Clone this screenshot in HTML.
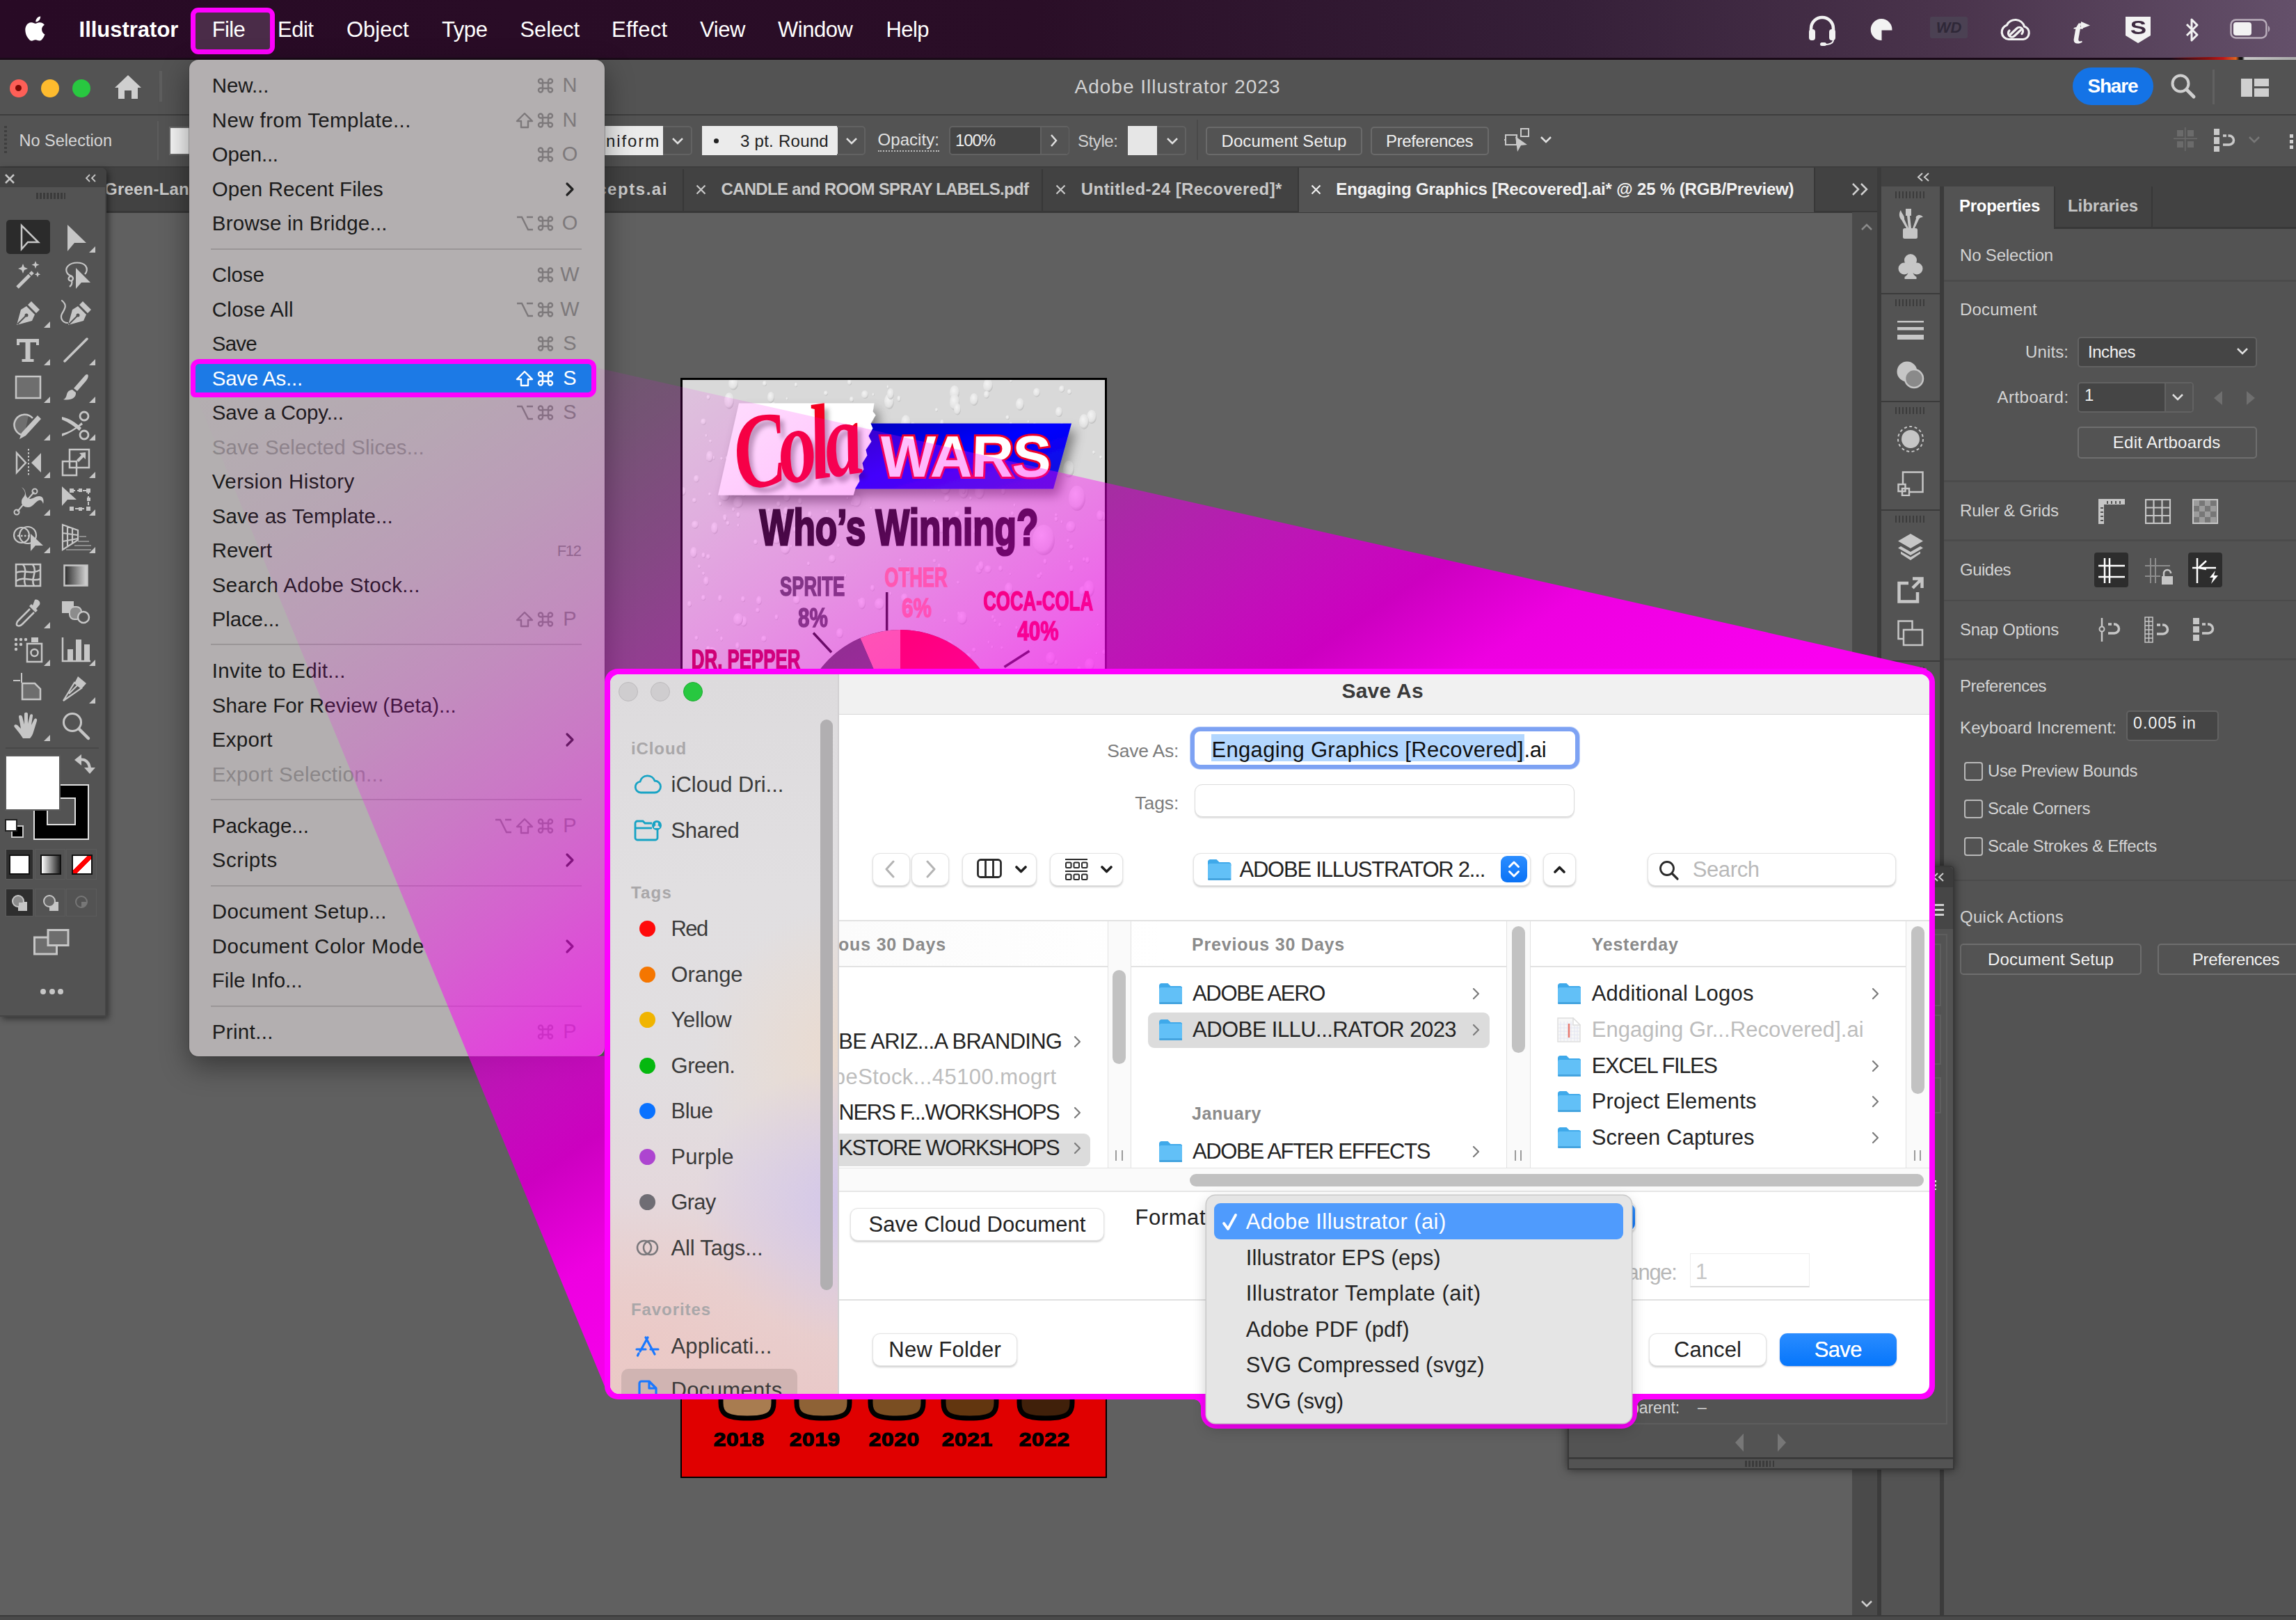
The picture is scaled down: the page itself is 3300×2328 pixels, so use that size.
<!DOCTYPE html><html><head><meta charset="utf-8"><title>Save As</title><style>html,body{margin:0;padding:0}
body{width:3300px;height:2328px;position:relative;overflow:hidden;background:#606060;font-family:"Liberation Sans",sans-serif;}
div,svg,.t{position:absolute}
.t{white-space:pre;line-height:1;display:block}
</style></head><body>
<div style="left:0px;top:0px;width:3300px;height:86px;background:linear-gradient(90deg,#280a25 0%,#2a0e27 45%,#351f38 68%,#4a344c 85%,#64506a 100%);"></div>
<div style="left:0px;top:83px;width:3300px;height:3px;background:#1a0a18;"></div>
<div style="left:3120px;top:82px;width:180px;height:3.5px;background:linear-gradient(90deg,transparent 0,#8a1010 30%,#c01818 42%,#e0641e 52%,#111 55%,#111 57%,#c8c8c8 59%,#a8a8a8 100%);"></div>
<svg style="left:35px;top:20px;" width="34" height="42" viewBox="-2 0 36 42"><path fill="#fff" d="M24.6 22.3c0-4.6 3.8-6.8 4-6.9-2.200-3.200-5.600-3.600-6.800-3.700-2.900-.3-5.600 1.700-7.100 1.700-1.500 0-3.700-1.700-6.100-1.600-3.100 0-6 1.800-7.600 4.600C-2.300 22-.1 30.400 3.200 35c1.600 2.300 3.400 4.800 5.800 4.700 2.300-.1 3.200-1.500 6-1.500s3.600 1.500 6.100 1.400c2.500 0 4.100-2.300 5.600-4.600 1.800-2.600 2.500-5.200 2.500-5.300-.1 0-4.600-1.800-4.600-7.400zM20.600 8.300C21.900 6.800 22.700 4.700 22.500 2.600c-1.800.1-4 1.200-5.300 2.700-1.200 1.300-2.200 3.500-1.900 5.500 2 .2 4-1 5.300-2.500z"/></svg>
<span class="t" style="left:113.6px;top:27.4px;font-size:31px;color:#fff;font-weight:700;letter-spacing:-0.02px;">Illustrator</span>
<div style="left:274px;top:10.5px;width:120.5px;height:67px;border:7px solid #ff00ff;border-radius:11px;background:#4a2c48;box-sizing:border-box;"></div>
<span class="t" style="left:304.7px;top:27.4px;font-size:31px;color:#fff;letter-spacing:-0.61px;">File</span>
<span class="t" style="left:399px;top:27.4px;font-size:31px;color:#fff;letter-spacing:-0.48px;">Edit</span>
<span class="t" style="left:498px;top:27.4px;font-size:31px;color:#fff;">Object</span>
<span class="t" style="left:635px;top:27.4px;font-size:31px;color:#fff;letter-spacing:-0.43px;">Type</span>
<span class="t" style="left:747.5px;top:27.4px;font-size:31px;color:#fff;letter-spacing:-0.11px;">Select</span>
<span class="t" style="left:879px;top:27.4px;font-size:31px;color:#fff;letter-spacing:0.3px;">Effect</span>
<span class="t" style="left:1006px;top:27.4px;font-size:31px;color:#fff;letter-spacing:-0.41px;">View</span>
<span class="t" style="left:1118px;top:27.4px;font-size:31px;color:#fff;letter-spacing:-0.46px;">Window</span>
<span class="t" style="left:1273.5px;top:27.4px;font-size:31px;color:#fff;letter-spacing:-0.56px;">Help</span>
<svg style="left:2596px;top:20px;" width="46" height="46" viewBox="0 0 46 46"><path fill="none" stroke="#f2f2f2" stroke-width="4.500" d="M7 27v-6a16 16 0 0 1 32 0v6"/><rect x="4" y="22" width="9" height="16" rx="4" fill="#f2f2f2"/><rect x="33" y="22" width="9" height="16" rx="4" fill="#f2f2f2"/><path fill="none" stroke="#f2f2f2" stroke-width="2" d="M39 37c0 5-6 7-13 7"/><rect x="20" y="41" width="9" height="5" rx="2.500" fill="#f2f2f2"/></svg>
<svg style="left:2687px;top:25px;" width="36" height="36" viewBox="0 0 36 36"><path fill="#f2f2f2" d="M17 2a15.500 15.500 0 1 0 .5 31v-14.500h15A15.500 15.500 0 0 0 17 2z"/></svg>
<div style="left:2774px;top:24px;width:54px;height:31px;background:#4b4254;border-radius:3px;opacity:.9"></div>
<span class="t" style="left:2782.7px;top:28.9px;font-size:22px;color:#2f2838;font-weight:700;font-style:italic;">WD</span>
<svg style="left:2873px;top:24px;" width="48" height="36" viewBox="0 0 48 36"><g fill="none" stroke="#f2f2f2" stroke-width="3.200" stroke-linecap="round"><path d="M14 32.500A10.500 10.500 0 0 1 11.500 12 13.500 13.500 0 0 1 36.500 14 9.500 9.500 0 0 1 35 32.500z"/><path d="M17 25l8.500-8a5.300 5.300 0 0 1 7.500 7.500M31 19.500l-8.500 8a5.300 5.300 0 0 1-7.500-7.500"/></g></svg>
<span class="t" style="left:2979.1px;top:19.5px;font-size:50px;color:#f2f2f2;font-weight:700;font-family:'Liberation Serif',serif;font-style:italic;">t</span>
<svg style="left:2990px;top:30px;" width="16" height="14" viewBox="0 0 16 14"><path fill="#f2f2f2" d="M1 1l13 5.500-13 5z"/></svg>
<svg style="left:3054px;top:23px;" width="38" height="40" viewBox="0 0 38 40"><path fill="#f2f2f2" d="M1 1h36v27l-18 11-18-11z"/></svg>
<span class="t" style="left:3063.7px;top:25.9px;font-size:28px;color:#3d2a40;font-weight:700;transform:scaleX(1.25);">S</span>
<svg style="left:3140px;top:24px;" width="22" height="38" viewBox="0 0 22 38"><path fill="none" stroke="#f2f2f2" stroke-width="3" stroke-linejoin="round" d="M3 11l15 15-8 8V4l8 8L3 27"/></svg>
<svg style="left:3205px;top:27px;" width="60" height="30" viewBox="0 0 60 30"><rect x="1.500" y="1.500" width="51" height="26" rx="7" fill="none" stroke="#b9adbb" stroke-width="2.500"/><rect x="5" y="5" width="26" height="19" rx="4" fill="#f2f2f2"/><path fill="#b9adbb" d="M55 10c3 1 3 8 0 9z"/></svg>
<div style="left:0px;top:86px;width:3300px;height:79px;background:#535353;"></div>
<div style="left:0px;top:164px;width:3300px;height:2px;background:#3d3d3d;"></div>
<div style="left:13.5px;top:113.5px;width:26px;height:26px;background:#fe5f57;border-radius:50%;"></div>
<div style="left:58.8px;top:113.5px;width:26px;height:26px;background:#febb2e;border-radius:50%;"></div>
<div style="left:103.7px;top:113.5px;width:26px;height:26px;background:#28c840;border-radius:50%;"></div>
<div style="left:22px;top:122px;width:9px;height:9px;background:#7a0a05;border-radius:50%;"></div>
<svg style="left:164px;top:107px;" width="40" height="36" viewBox="0 0 40 36"><path fill="#cfcfcf" d="M20 1L1 19h5v16h9V23h10v12h9V19h5z"/></svg>
<div style="left:229px;top:102px;width:4px;height:44px;background:#5e5e5e;"></div>
<span class="t" style="left:1544.5px;top:111.4px;font-size:28px;color:#d2d2d2;letter-spacing:1.0px;">Adobe Illustrator 2023</span>
<div style="left:2979px;top:96.5px;width:116px;height:54px;background:#1473e6;border-radius:27px;"></div>
<span class="t" style="left:3000.4px;top:109.9px;font-size:28px;color:#fff;font-weight:700;letter-spacing:-1.16px;">Share</span>
<svg style="left:3118px;top:104px;" width="42" height="42" viewBox="0 0 42 42"><circle cx="16" cy="16" r="11.500" fill="none" stroke="#cfcfcf" stroke-width="4"/><path stroke="#cfcfcf" stroke-width="5" stroke-linecap="round" d="M25 25l10 10"/></svg>
<div style="left:3180px;top:100px;width:3px;height:50px;background:#616161;"></div>
<svg style="left:3221px;top:113px;" width="40" height="26" viewBox="0 0 40 26"><path fill="#cfcfcf" d="M0 0h16v26H0zM19 0h21v11H19zM19 14h21v12H19z"/></svg>
<div style="left:0px;top:166px;width:3300px;height:75px;background:#535353;"></div>
<div style="left:0px;top:239px;width:3300px;height:2px;background:#3d3d3d;"></div>
<div style="left:6px;top:181px;width:4px;height:42px;background:repeating-linear-gradient(180deg,#3e3e3e 0 3px,transparent 3px 6px);"></div>
<span class="t" style="left:27.4px;top:191.2px;font-size:23.5px;color:#d6d6d6;letter-spacing:0.03px;">No Selection</span>
<div style="left:226px;top:174px;width:2px;height:56px;background:#5c5c5c;"></div>
<div style="left:243px;top:182px;width:80px;height:41px;background:#f4f4f4;border:2px solid #6a6a6a;box-sizing:border-box;"></div>
<div style="left:840px;top:181px;width:113px;height:42px;background:#ebebeb;"></div>
<span class="t" style="left:871px;top:190.9px;font-size:24px;color:#1e1e1e;letter-spacing:1.89px;">niform</span>
<div style="left:953px;top:181px;width:42px;height:42px;border:2px solid #626262;border-left:none;border-radius:0 5px 5px 0;box-sizing:border-box;"></div>
<svg style="left:965px;top:197px;" width="18" height="12" viewBox="0 0 18 12"><path fill="none" stroke="#e0e0e0" stroke-width="2.500" d="M2 2l7 7 7-7"/></svg>
<div style="left:1008.6px;top:181px;width:195px;height:42px;background:#ebebeb;"></div>
<div style="left:1026px;top:199px;width:7px;height:7px;background:#222;border-radius:50%;"></div>
<span class="t" style="left:1064px;top:190.9px;font-size:24px;color:#1e1e1e;letter-spacing:0.26px;">3 pt. Round</span>
<div style="left:1203px;top:181px;width:41px;height:42px;border:2px solid #626262;border-left:none;border-radius:0 5px 5px 0;box-sizing:border-box;"></div>
<svg style="left:1215px;top:197px;" width="18" height="12" viewBox="0 0 18 12"><path fill="none" stroke="#e0e0e0" stroke-width="2.500" d="M2 2l7 7 7-7"/></svg>
<span class="t" style="left:1261.5px;top:188.9px;font-size:24px;color:#e2e2e2;letter-spacing:0.06px;border-bottom:2px dotted #bdbdbd;padding-bottom:3px;">Opacity:</span>
<div style="left:1363.5px;top:181px;width:173px;height:42px;border:2px solid #626262;border-radius:5px;box-sizing:border-box;background:#454545;"></div>
<div style="left:1495px;top:183px;width:41px;height:38px;background:#535353;border-left:2px solid #626262;box-sizing:border-box;border-radius:0 4px 4px 0;"></div>
<span class="t" style="left:1373px;top:189.9px;font-size:24px;color:#f0f0f0;letter-spacing:-1.1px;">100%</span>
<svg style="left:1509px;top:192px;" width="12" height="20" viewBox="0 0 12 20"><path fill="none" stroke="#e0e0e0" stroke-width="2.500" d="M2 2l7 8-7 8"/></svg>
<span class="t" style="left:1549px;top:190.9px;font-size:24px;color:#d0d0d0;letter-spacing:-0.42px;">Style:</span>
<div style="left:1621px;top:181px;width:42px;height:42px;background:#e6e6e6;"></div>
<div style="left:1663px;top:181px;width:42px;height:42px;border:2px solid #626262;border-left:none;border-radius:0 5px 5px 0;box-sizing:border-box;"></div>
<svg style="left:1676px;top:197px;" width="18" height="12" viewBox="0 0 18 12"><path fill="none" stroke="#e0e0e0" stroke-width="2.500" d="M2 2l7 7 7-7"/></svg>
<div style="left:1720px;top:172px;width:2px;height:58px;background:#4a4a4a;"></div>
<div style="left:1733.4px;top:182px;width:224.3px;height:40.5px;border:2px solid #6a6a6a;border-radius:5px;box-sizing:border-box;"></div>
<span class="t" style="left:1755.5px;top:190.9px;font-size:24px;color:#f0f0f0;letter-spacing:0.09px;">Document Setup</span>
<div style="left:1969.7px;top:182px;width:170.2px;height:40.5px;border:2px solid #6a6a6a;border-radius:5px;box-sizing:border-box;"></div>
<span class="t" style="left:1992.1px;top:190.9px;font-size:24px;color:#f0f0f0;letter-spacing:-0.4px;">Preferences</span>
<svg style="left:2162px;top:182px;" width="38" height="40" viewBox="0 0 38 40"><g fill="none" stroke="#c9c9c9" stroke-width="2"><rect x="24" y="3" width="11" height="11"/><path d="M2 12h16v14H2zM0 19h3M17 19h4"/></g><path fill="#c9c9c9" d="M16 14l17 12-9 1-5 9z"/></svg>
<svg style="left:2213px;top:195px;" width="18" height="12" viewBox="0 0 18 12"><path fill="none" stroke="#e0e0e0" stroke-width="2.500" d="M2 2l7 7 7-7"/></svg>
<svg style="left:3124px;top:183px;" width="34" height="34" viewBox="0 0 34 34"><g fill="#6b6b6b"><rect x="5" y="4" width="9" height="9"/><rect x="20" y="4" width="9" height="9"/><rect x="5" y="20" width="9" height="9"/><rect x="20" y="20" width="9" height="9"/><rect x="0" y="15.500" width="34" height="1.500"/><rect x="16" y="0" width="1.500" height="34"/></g></svg>
<svg style="left:3178px;top:185px;" width="40" height="34" viewBox="0 0 40 34"><g fill="#c9c9c9"><rect x="4" y="0" width="8" height="9"/><rect x="4" y="12" width="8" height="10"/><rect x="4" y="25" width="8" height="8"/></g><path fill="none" stroke="#c9c9c9" stroke-width="3.500" d="M17 10h9a6 6 0 0 1 0 13h-9" stroke-dasharray="5 2.500 40"/></svg>
<svg style="left:3231px;top:195px;" width="18" height="12" viewBox="0 0 18 12"><path fill="none" stroke="#777" stroke-width="2.500" d="M2 2l7 7 7-7"/></svg>
<div style="left:3291px;top:193px;width:5px;height:22px;background:repeating-linear-gradient(180deg,#d0d0d0 0 5px,transparent 5px 8px);"></div>
<div style="left:0px;top:241px;width:2698px;height:64px;background:#424242;"></div>
<div style="left:0px;top:303px;width:2698px;height:2.5px;background:#383838;"></div>
<span class="t" style="left:150px;top:259.9px;font-size:24px;color:#c9c9c9;font-weight:700;letter-spacing:0.22px;">Green-Lan</span>
<span class="t" style="left:842px;top:259.9px;font-size:24px;color:#c9c9c9;font-weight:700;letter-spacing:1.55px;">ncepts.ai</span>
<div style="left:981px;top:243px;width:2px;height:60px;background:#383838;"></div>
<svg style="left:1000px;top:265px;" width="15" height="15" viewBox="0 0 15 15"><path stroke="#c9c9c9" stroke-width="2.200" d="M1.500 1.500l12 12M13.500 1.500l-12 12"/></svg>
<span class="t" style="left:1036.4px;top:259.9px;font-size:24px;color:#c9c9c9;font-weight:700;letter-spacing:-0.69px;">CANDLE and ROOM SPRAY LABELS.pdf</span>
<div style="left:1497px;top:243px;width:2px;height:60px;background:#383838;"></div>
<svg style="left:1517px;top:265px;" width="15" height="15" viewBox="0 0 15 15"><path stroke="#c9c9c9" stroke-width="2.200" d="M1.500 1.500l12 12M13.500 1.500l-12 12"/></svg>
<span class="t" style="left:1553.8px;top:259.9px;font-size:24px;color:#c9c9c9;font-weight:700;letter-spacing:0.43px;">Untitled-24 [Recovered]*</span>
<div style="left:1865px;top:241px;width:744px;height:64px;background:#535353;border-left:2px solid #383838;border-right:2px solid #383838;box-sizing:border-box;"></div>
<svg style="left:1883.6px;top:265px;" width="15" height="15" viewBox="0 0 15 15"><path stroke="#f0f0f0" stroke-width="2.200" d="M1.500 1.500l12 12M13.500 1.500l-12 12"/></svg>
<span class="t" style="left:1920.3px;top:259.9px;font-size:24px;color:#f2f2f2;font-weight:700;letter-spacing:-0.15px;">Engaging Graphics [Recovered].ai* @ 25 % (RGB/Preview)</span>
<svg style="left:2661px;top:262px;" width="26" height="20" viewBox="0 0 26 20"><path fill="none" stroke="#d0d0d0" stroke-width="2.500" d="M2 2l8 8-8 8M14 2l8 8-8 8"/></svg>
<div style="left:2662px;top:305px;width:37px;height:2018px;background:#4a4a4a;"></div>
<svg style="left:2674px;top:320px;" width="18" height="12" viewBox="0 0 18 12"><path fill="none" stroke="#8a8a8a" stroke-width="2.500" d="M2 10l7-7 7 7"/></svg>
<svg style="left:2674px;top:2299px;" width="18" height="12" viewBox="0 0 18 12"><path fill="none" stroke="#d0d0d0" stroke-width="2.500" d="M2 2l7 7 7-7"/></svg>
<div style="left:2698px;top:241px;width:96px;height:2082px;background:#3b3b3b;"></div>
<div style="left:2704px;top:241px;width:596px;height:27px;background:#424242;"></div>
<svg style="left:2755px;top:248px;" width="20" height="13" viewBox="0 0 20 13"><path fill="none" stroke="#d0d0d0" stroke-width="2" d="M8 1L2 6.500 8 12M17 1l-6 5.500L17 12"/></svg>
<div style="left:2704px;top:268px;width:83.5px;height:153px;background:#535353;"></div>
<div style="left:2724px;top:275px;width:43px;height:10px;background:repeating-linear-gradient(90deg,#3b3b3b 0 2.500px,transparent 2.500px 5px);"></div>
<div style="left:2704px;top:423px;width:83.5px;height:153px;background:#535353;"></div>
<div style="left:2724px;top:430px;width:43px;height:10px;background:repeating-linear-gradient(90deg,#3b3b3b 0 2.500px,transparent 2.500px 5px);"></div>
<div style="left:2704px;top:578px;width:83.5px;height:154px;background:#535353;"></div>
<div style="left:2724px;top:585px;width:43px;height:10px;background:repeating-linear-gradient(90deg,#3b3b3b 0 2.500px,transparent 2.500px 5px);"></div>
<div style="left:2704px;top:734px;width:83.5px;height:215px;background:#535353;"></div>
<div style="left:2724px;top:741px;width:43px;height:10px;background:repeating-linear-gradient(90deg,#3b3b3b 0 2.500px,transparent 2.500px 5px);"></div>
<div style="left:2704px;top:951px;width:83.5px;height:1372px;background:#535353;"></div>
<div style="left:2724px;top:958px;width:43px;height:10px;background:repeating-linear-gradient(90deg,#3b3b3b 0 2.500px,transparent 2.500px 5px);"></div>
<svg style="left:2727.5px;top:299px;" width="36" height="44" viewBox="0 0 36 44"><g fill="#c6c6c6"><rect x="7" y="29" width="21" height="15" rx="2.500"/><path d="M12 29L5 17C1 13 1 7 4 3c1 5 6 8 5 13l6 13zM15 29L13 11h-2V1h8v10h-2l2 18zM21 29l5-14c-2-4 6-8 10-2-3 0-5 1-6 3l-6 13z"/></g></svg>
<svg style="left:2727.5px;top:365px;" width="36" height="37" viewBox="0 0 36 37"><g fill="#c6c6c6"><circle cx="18" cy="9" r="9"/><circle cx="9" cy="21" r="8.500"/><circle cx="27" cy="21" r="8.500"/><path d="M15.500 16h5c0 10 1 14 6 17v3h-17v-3c5-3 6-7 6-17z"/></g></svg>
<svg style="left:2726.5px;top:460.7px;" width="38" height="28" viewBox="0 0 38 28"><g fill="#c6c6c6"><rect y="0" width="38" height="2.500"/><rect y="9" width="38" height="4.500"/><rect y="20" width="38" height="7"/></g></svg>
<svg style="left:2725.5px;top:519px;" width="40" height="40" viewBox="0 0 40 40"><circle cx="15" cy="15" r="14.500" fill="#c6c6c6"/><circle cx="25" cy="25" r="13" fill="#8a8a8a" stroke="#c6c6c6" stroke-width="2.500"/></svg>
<svg style="left:2725.5px;top:611px;" width="40" height="40" viewBox="0 0 40 40"><circle cx="20" cy="20" r="13" fill="#c6c6c6"/><circle cx="20" cy="20" r="18" fill="none" stroke="#c6c6c6" stroke-width="2" stroke-dasharray="4 3.500"/></svg>
<svg style="left:2726.5px;top:677px;" width="38" height="36" viewBox="0 0 38 36"><g fill="none" stroke="#c6c6c6" stroke-width="2.500"><path d="M8 18V1.500h28.500V30H18"/><rect x="1.500" y="19" width="10" height="10"/><rect x="7" y="25" width="10" height="10"/></g></svg>
<svg style="left:2727.5px;top:766.5px;" width="36" height="38" viewBox="0 0 36 38"><path fill="#c6c6c6" d="M18 0l18 10.500L18 21 0 10.500zM4 18l14 8 14-8 4 2.500L18 31 0 20.500zM4 25.500l14 8 14-8 0 3L18 38 4 29z"/></svg>
<svg style="left:2726.5px;top:829.4px;" width="38" height="38" viewBox="0 0 38 38"><path fill="none" stroke="#c6c6c6" stroke-width="4.500" d="M16 9H2.500v26.500H29V22M22 16L35 3M22 2.500h13.500V16"/></svg>
<svg style="left:2726.5px;top:891.4px;" width="38" height="38" viewBox="0 0 38 38"><g fill="none" stroke="#c6c6c6" stroke-width="2.500"><path d="M9 27H1.500V1.500h20V14"/><rect x="9" y="14" width="27" height="22"/></g></svg>
<div style="left:2794px;top:268px;width:506px;height:2055px;background:#535353;"></div>
<div style="left:2794px;top:268px;width:506px;height:60px;background:#424242;"></div>
<div style="left:2794px;top:268px;width:158px;height:61px;background:#535353;"></div>
<div style="left:2952px;top:268px;width:2px;height:58px;background:#383838;"></div>
<div style="left:3092px;top:268px;width:2px;height:58px;background:#383838;"></div>
<div style="left:2952px;top:326px;width:348px;height:2.5px;background:#383838;"></div>
<span class="t" style="left:2816px;top:283.9px;font-size:24px;color:#fff;font-weight:700;letter-spacing:-0.27px;">Properties</span>
<span class="t" style="left:2972px;top:283.9px;font-size:24px;color:#c4c4c4;font-weight:700;letter-spacing:-0.04px;">Libraries</span>
<span class="t" style="left:2817px;top:354.9px;font-size:24px;color:#d4d4d4;letter-spacing:-0.17px;">No Selection</span>
<div style="left:2794px;top:402px;width:506px;height:2.5px;background:#4b4b4b;"></div>
<span class="t" style="left:2817px;top:432.7px;font-size:24px;color:#d4d4d4;letter-spacing:0.2px;">Document</span>
<span class="t" style="left:2911.1px;top:493.9px;font-size:24px;color:#d4d4d4;letter-spacing:0.11px;">Units:</span>
<div style="left:2986px;top:483.7px;width:258px;height:44px;border:2px solid #626262;border-radius:5px;box-sizing:border-box;background:#454545;"></div>
<span class="t" style="left:3001px;top:493.9px;font-size:24px;color:#f2f2f2;letter-spacing:-0.45px;">Inches</span>
<svg style="left:3214px;top:499px;" width="18" height="12" viewBox="0 0 18 12"><path fill="none" stroke="#e0e0e0" stroke-width="2.500" d="M2 2l7 7 7-7"/></svg>
<span class="t" style="left:2870.5px;top:558.6px;font-size:24px;color:#d4d4d4;letter-spacing:0.48px;">Artboard:</span>
<div style="left:2986px;top:548.5px;width:167px;height:44.5px;border:2px solid #626262;border-radius:5px;box-sizing:border-box;background:#454545;"></div>
<div style="left:3111px;top:550.5px;width:40px;height:40.5px;background:#535353;border-left:2px solid #626262;box-sizing:border-box;border-radius:0 4px 4px 0;"></div>
<span class="t" style="left:2996px;top:555.9px;font-size:24px;color:#f2f2f2;">1</span>
<svg style="left:3121px;top:565px;" width="18" height="12" viewBox="0 0 18 12"><path fill="none" stroke="#e0e0e0" stroke-width="2.500" d="M2 2l7 7 7-7"/></svg>
<svg style="left:3182px;top:562px;" width="12" height="20" viewBox="0 0 12 20"><path fill="#6f6f6f" d="M12 0v20L0 10z"/></svg>
<svg style="left:3229px;top:562px;" width="12" height="20" viewBox="0 0 12 20"><path fill="#6f6f6f" d="M0 0v20l12-10z"/></svg>
<div style="left:2986px;top:613px;width:258px;height:45.5px;border:2px solid #6e6e6e;border-radius:5px;box-sizing:border-box;"></div>
<span class="t" style="left:3036.7px;top:623.9px;font-size:24px;color:#f2f2f2;letter-spacing:0.3px;">Edit Artboards</span>
<div style="left:2794px;top:690px;width:506px;height:2.5px;background:#4b4b4b;"></div>
<span class="t" style="left:2817px;top:722.3px;font-size:24px;color:#d4d4d4;letter-spacing:-0.16px;">Ruler &amp; Grids</span>
<svg style="left:3016px;top:717px;" width="38" height="36" viewBox="0 0 38 36"><path fill="#c6c6c6" d="M0 0h38v8H8v28H0z"/><g fill="#535353"><rect x="12" y="3" width="2" height="4"/><rect x="18" y="3" width="2" height="4"/><rect x="24" y="3" width="2" height="4"/><rect x="30" y="3" width="2" height="4"/><rect x="3" y="12" width="4" height="2"/><rect x="3" y="18" width="4" height="2"/><rect x="3" y="24" width="4" height="2"/><rect x="3" y="30" width="4" height="2"/></g></svg>
<svg style="left:3083px;top:717px;" width="38" height="36" viewBox="0 0 38 36"><g fill="none" stroke="#c6c6c6" stroke-width="2.200"><rect x="1" y="1" width="35" height="34"/><path d="M12.500 1v34M24.500 1v34M1 12.500h35M1 24h35"/></g></svg>
<svg style="left:3151px;top:717px;" width="38" height="36" viewBox="0 0 38 36"><rect x="1" y="1" width="35" height="34" fill="#777" stroke="#c6c6c6" stroke-width="2.200"/><g fill="#9c9c9c"><rect x="2" y="2" width="8" height="8"/><rect x="18" y="2" width="8" height="8"/><rect x="10" y="10" width="8" height="8"/><rect x="26" y="10" width="8" height="8"/><rect x="2" y="18" width="8" height="8"/><rect x="18" y="18" width="8" height="8"/><rect x="10" y="26" width="8" height="8"/><rect x="26" y="26" width="8" height="8"/></g></svg>
<div style="left:2794px;top:775px;width:506px;height:2.5px;background:#4b4b4b;"></div>
<span class="t" style="left:2817px;top:807.4px;font-size:24px;color:#d4d4d4;letter-spacing:-0.51px;">Guides</span>
<div style="left:3010px;top:794px;width:49px;height:50px;background:#2d2d2d;border-radius:4px;"></div>
<svg style="left:3016px;top:802px;" width="38" height="36" viewBox="0 0 38 36"><path stroke="#fff" stroke-width="2.500" fill="none" d="M9 0v36M16 0v36M0 11h38M0 27h38"/></svg>
<svg style="left:3083px;top:802px;" width="42" height="38" viewBox="0 0 42 38"><path stroke="#8d8d8d" stroke-width="2" fill="none" d="M8 0v36M15 0v36M0 11h36M0 26h22"/><rect x="24" y="26" width="16" height="12" fill="#c6c6c6"/><path fill="none" stroke="#c6c6c6" stroke-width="2.500" d="M27 26v-4a5 5 0 0 1 10 0"/></svg>
<div style="left:3145px;top:794px;width:49px;height:50px;background:#2d2d2d;border-radius:4px;"></div>
<svg style="left:3151px;top:800px;" width="40" height="40" viewBox="0 0 40 40"><path stroke="#fff" stroke-width="2.500" fill="none" d="M7 2v36M0 16h34M20 6l-11 10 11 2"/><path fill="#fff" d="M33 20l-8 10h5l-3 9 10-12h-6z"/></svg>
<div style="left:2794px;top:861.7px;width:506px;height:2.5px;background:#4b4b4b;"></div>
<span class="t" style="left:2817px;top:892.9px;font-size:24px;color:#d4d4d4;letter-spacing:-0.29px;">Snap Options</span>
<svg style="left:3016px;top:888px;" width="36" height="34" viewBox="0 0 36 34"><path stroke="#c6c6c6" stroke-width="2.500" d="M5 0v34"/><circle cx="5" cy="16" r="3.500" fill="#535353" stroke="#c6c6c6" stroke-width="2"/><path fill="none" stroke="#c6c6c6" stroke-width="3.500" d="M14 9h9a6.500 6.500 0 0 1 0 13h-9" stroke-dasharray="5 3 40"/></svg>
<svg style="left:3082px;top:886px;" width="40" height="38" viewBox="0 0 40 38"><g stroke="#c6c6c6" stroke-width="1.500" fill="none"><path d="M1 1h11v36H1zM6.500 1v36M1 7h11M1 13h11M1 19h11M1 25h11M1 31h11"/></g><g transform="translate(4,3)"><path fill="none" stroke="#c6c6c6" stroke-width="3.500" d="M14 9h9a6.500 6.500 0 0 1 0 13h-9" stroke-dasharray="5 3 40"/></g></svg>
<svg style="left:3151px;top:888px;" width="36" height="34" viewBox="0 0 36 34"><g fill="#c6c6c6"><rect x="1" y="0" width="9" height="9"/><rect x="1" y="12" width="9" height="9"/><rect x="1" y="24" width="9" height="9"/></g><path fill="none" stroke="#c6c6c6" stroke-width="3.500" d="M14 9h9a6.500 6.500 0 0 1 0 13h-9" stroke-dasharray="5 3 40"/></svg>
<div style="left:2794px;top:946px;width:506px;height:2.5px;background:#4b4b4b;"></div>
<span class="t" style="left:2817px;top:973.6px;font-size:24px;color:#d4d4d4;letter-spacing:-0.49px;">Preferences</span>
<span class="t" style="left:2817px;top:1033.5px;font-size:24px;color:#d4d4d4;letter-spacing:0.12px;">Keyboard Increment:</span>
<div style="left:3055.6px;top:1021px;width:133.5px;height:44px;border:2px solid #626262;border-radius:5px;box-sizing:border-box;background:#454545;"></div>
<span class="t" style="left:3066px;top:1028.4px;font-size:23px;color:#f2f2f2;letter-spacing:1.14px;">0.005 in</span>
<div style="left:2823px;top:1094.5px;width:27px;height:27px;border:2px solid #b9b9b9;border-radius:4px;box-sizing:border-box;"></div>
<span class="t" style="left:2857px;top:1095.9px;font-size:24px;color:#d4d4d4;letter-spacing:-0.43px;">Use Preview Bounds</span>
<div style="left:2823px;top:1148.5px;width:27px;height:27px;border:2px solid #b9b9b9;border-radius:4px;box-sizing:border-box;"></div>
<span class="t" style="left:2857px;top:1149.9px;font-size:24px;color:#d4d4d4;letter-spacing:-0.39px;">Scale Corners</span>
<div style="left:2823px;top:1202.5px;width:27px;height:27px;border:2px solid #b9b9b9;border-radius:4px;box-sizing:border-box;"></div>
<span class="t" style="left:2857px;top:1203.9px;font-size:24px;color:#d4d4d4;letter-spacing:-0.32px;">Scale Strokes &amp; Effects</span>
<div style="left:2794px;top:1263.8px;width:506px;height:2.5px;background:#4b4b4b;"></div>
<span class="t" style="left:2817px;top:1305.7px;font-size:24px;color:#d4d4d4;letter-spacing:0.28px;">Quick Actions</span>
<div style="left:2817px;top:1355.7px;width:261px;height:45.5px;border:2px solid #6e6e6e;border-radius:5px;box-sizing:border-box;"></div>
<span class="t" style="left:2857.1px;top:1366.9px;font-size:24px;color:#f2f2f2;letter-spacing:0.16px;">Document Setup</span>
<div style="left:3101px;top:1355.7px;width:230px;height:45.5px;border:2px solid #6e6e6e;border-radius:5px;box-sizing:border-box;"></div>
<span class="t" style="left:3151px;top:1366.9px;font-size:24px;color:#f2f2f2;letter-spacing:-0.4px;">Preferences</span>
<div style="left:0px;top:2321px;width:3300px;height:7px;background:#4a4a4a;"></div>
<div style="left:0px;top:2321px;width:3300px;height:2px;background:#3a3a3a;"></div>
<svg style="left:980px;top:546px;" width="609" height="430" viewBox="0 0 609 430"><defs><radialGradient id="dg" cx=".4" cy=".35" r=".7"><stop offset="0" stop-color="#f4f4f4"/><stop offset=".7" stop-color="#e2e2e2"/><stop offset="1" stop-color="#b4b4b4"/></radialGradient>
<linearGradient id="bl" x1="0" y1="0" x2="1" y2="1"><stop offset="0" stop-color="#0000b8"/><stop offset=".45" stop-color="#0000ff"/><stop offset="1" stop-color="#1a10d8"/></linearGradient>
<filter id="sh" x="-10%" y="-10%" width="130%" height="150%"><feDropShadow dx="7" dy="10" stdDeviation="8" flood-color="#000" flood-opacity=".42"/></filter></defs>
<rect width="609" height="430" fill="#d9d9d9"/><ellipse cx="197" cy="63" rx="1.5" ry="1.7" fill="url(#dg)"/><ellipse cx="326" cy="154" rx="1.5" ry="2.5" fill="url(#dg)"/><ellipse cx="131" cy="36" rx="4" ry="4.6" fill="url(#dg)"/><ellipse cx="55" cy="178" rx="2" ry="3.3" fill="url(#dg)"/><ellipse cx="384" cy="245" rx="1.5" ry="2.2" fill="url(#dg)"/><ellipse cx="242" cy="410" rx="1.5" ry="2.2" fill="url(#dg)"/><ellipse cx="81" cy="176" rx="7" ry="8.2" fill="url(#dg)"/><ellipse cx="188" cy="343" rx="2" ry="2.3" fill="url(#dg)"/><ellipse cx="348" cy="79" rx="2" ry="2.9" fill="url(#dg)"/><ellipse cx="38" cy="25" rx="2.5" ry="3.5" fill="url(#dg)"/><ellipse cx="324" cy="326" rx="5" ry="7.3" fill="url(#dg)"/><ellipse cx="276" cy="126" rx="2" ry="3.0" fill="url(#dg)"/><ellipse cx="149" cy="241" rx="7" ry="9.8" fill="url(#dg)"/><ellipse cx="209" cy="189" rx="2" ry="2.3" fill="url(#dg)"/><ellipse cx="255" cy="318" rx="2" ry="3.3" fill="url(#dg)"/><ellipse cx="257" cy="404" rx="2" ry="3.1" fill="url(#dg)"/><ellipse cx="349" cy="368" rx="3" ry="3.9" fill="url(#dg)"/><ellipse cx="213" cy="209" rx="5" ry="5.7" fill="url(#dg)"/><ellipse cx="57" cy="113" rx="2" ry="2.3" fill="url(#dg)"/><ellipse cx="427" cy="272" rx="5" ry="6.4" fill="url(#dg)"/><ellipse cx="235" cy="281" rx="1.5" ry="2.5" fill="url(#dg)"/><ellipse cx="216" cy="257" rx="5" ry="5.7" fill="url(#dg)"/><ellipse cx="468" cy="54" rx="2.5" ry="3.3" fill="url(#dg)"/><ellipse cx="558" cy="209" rx="2" ry="2.7" fill="url(#dg)"/><ellipse cx="335" cy="371" rx="4" ry="6.5" fill="url(#dg)"/><ellipse cx="170" cy="174" rx="3" ry="4.5" fill="url(#dg)"/><ellipse cx="232" cy="97" rx="2" ry="2.4" fill="url(#dg)"/><ellipse cx="141" cy="98" rx="5" ry="8.0" fill="url(#dg)"/><ellipse cx="111" cy="118" rx="2" ry="2.7" fill="url(#dg)"/><ellipse cx="225" cy="238" rx="2" ry="3.0" fill="url(#dg)"/><ellipse cx="314" cy="259" rx="1.5" ry="2.1" fill="url(#dg)"/><ellipse cx="530" cy="400" rx="7" ry="9.3" fill="url(#dg)"/><ellipse cx="243" cy="43" rx="4" ry="4.5" fill="url(#dg)"/><ellipse cx="41" cy="88" rx="2" ry="2.3" fill="url(#dg)"/><ellipse cx="366" cy="43" rx="2" ry="2.8" fill="url(#dg)"/><ellipse cx="578" cy="258" rx="2" ry="3.2" fill="url(#dg)"/><ellipse cx="374" cy="62" rx="3" ry="5.0" fill="url(#dg)"/><ellipse cx="367" cy="199" rx="2" ry="3.2" fill="url(#dg)"/><ellipse cx="605" cy="196" rx="5" ry="6.4" fill="url(#dg)"/><ellipse cx="88" cy="315" rx="3" ry="4.2" fill="url(#dg)"/><ellipse cx="421" cy="217" rx="2.5" ry="4.2" fill="url(#dg)"/><ellipse cx="322" cy="62" rx="7" ry="11.5" fill="url(#dg)"/><ellipse cx="462" cy="125" rx="2" ry="3.0" fill="url(#dg)"/><ellipse cx="159" cy="154" rx="2" ry="2.6" fill="url(#dg)"/><ellipse cx="136" cy="227" rx="7" ry="9.1" fill="url(#dg)"/><ellipse cx="136" cy="341" rx="2.5" ry="4.0" fill="url(#dg)"/><ellipse cx="498" cy="311" rx="2.5" ry="3.0" fill="url(#dg)"/><ellipse cx="300" cy="307" rx="1.5" ry="2.4" fill="url(#dg)"/><ellipse cx="288" cy="81" rx="3" ry="4.1" fill="url(#dg)"/><ellipse cx="571" cy="415" rx="3" ry="3.4" fill="url(#dg)"/><ellipse cx="62" cy="197" rx="3" ry="3.7" fill="url(#dg)"/><ellipse cx="380" cy="378" rx="1.5" ry="2.1" fill="url(#dg)"/><ellipse cx="398" cy="336" rx="2" ry="3.2" fill="url(#dg)"/><ellipse cx="73" cy="163" rx="2.5" ry="3.5" fill="url(#dg)"/><ellipse cx="109" cy="331" rx="3" ry="3.5" fill="url(#dg)"/><ellipse cx="576" cy="303" rx="5" ry="6.7" fill="url(#dg)"/><ellipse cx="577" cy="304" rx="2" ry="3.4" fill="url(#dg)"/><ellipse cx="17" cy="248" rx="5" ry="7.9" fill="url(#dg)"/><ellipse cx="89" cy="347" rx="5" ry="7.5" fill="url(#dg)"/><ellipse cx="213" cy="230" rx="2" ry="2.2" fill="url(#dg)"/><ellipse cx="487" cy="305" rx="2" ry="2.8" fill="url(#dg)"/><ellipse cx="569" cy="182" rx="2.5" ry="4.0" fill="url(#dg)"/><ellipse cx="129" cy="106" rx="3" ry="4.2" fill="url(#dg)"/><ellipse cx="465" cy="137" rx="7" ry="9.5" fill="url(#dg)"/><ellipse cx="80" cy="382" rx="3" ry="4.9" fill="url(#dg)"/><ellipse cx="403" cy="342" rx="7" ry="9.5" fill="url(#dg)"/><ellipse cx="559" cy="211" rx="7" ry="8.3" fill="url(#dg)"/><ellipse cx="311" cy="367" rx="2" ry="2.9" fill="url(#dg)"/><ellipse cx="473" cy="63" rx="2" ry="2.8" fill="url(#dg)"/><ellipse cx="442" cy="234" rx="3" ry="4.5" fill="url(#dg)"/><ellipse cx="323" cy="203" rx="2" ry="3.3" fill="url(#dg)"/><ellipse cx="35" cy="80" rx="1.5" ry="2.3" fill="url(#dg)"/><ellipse cx="309" cy="236" rx="2" ry="2.7" fill="url(#dg)"/><ellipse cx="373" cy="212" rx="7" ry="8.5" fill="url(#dg)"/><ellipse cx="169" cy="213" rx="5" ry="7.0" fill="url(#dg)"/><ellipse cx="151" cy="220" rx="3" ry="5.0" fill="url(#dg)"/><ellipse cx="544" cy="85" rx="5" ry="5.9" fill="url(#dg)"/><ellipse cx="74" cy="186" rx="2" ry="3.0" fill="url(#dg)"/><ellipse cx="261" cy="89" rx="3" ry="4.7" fill="url(#dg)"/><ellipse cx="546" cy="65" rx="3" ry="3.6" fill="url(#dg)"/><ellipse cx="538" cy="406" rx="2.5" ry="3.9" fill="url(#dg)"/><ellipse cx="57" cy="372" rx="2" ry="3.4" fill="url(#dg)"/><ellipse cx="507" cy="68" rx="4" ry="6.8" fill="url(#dg)"/><ellipse cx="246" cy="177" rx="3" ry="3.9" fill="url(#dg)"/><ellipse cx="440" cy="8" rx="7" ry="9.6" fill="url(#dg)"/><ellipse cx="428" cy="161" rx="7" ry="10.3" fill="url(#dg)"/><ellipse cx="312" cy="27" rx="2.5" ry="4.2" fill="url(#dg)"/><ellipse cx="64" cy="112" rx="1.5" ry="2.5" fill="url(#dg)"/><ellipse cx="111" cy="317" rx="4" ry="6.4" fill="url(#dg)"/><ellipse cx="412" cy="397" rx="4" ry="4.8" fill="url(#dg)"/><ellipse cx="560" cy="240" rx="3" ry="3.5" fill="url(#dg)"/><ellipse cx="35" cy="289" rx="4" ry="6.5" fill="url(#dg)"/><ellipse cx="164" cy="7" rx="2" ry="3.2" fill="url(#dg)"/><ellipse cx="51" cy="360" rx="2" ry="2.5" fill="url(#dg)"/><ellipse cx="74" cy="5" rx="7" ry="9.5" fill="url(#dg)"/><ellipse cx="557" cy="261" rx="1.5" ry="2.1" fill="url(#dg)"/><ellipse cx="145" cy="46" rx="2" ry="2.5" fill="url(#dg)"/><ellipse cx="110" cy="392" rx="3" ry="4.3" fill="url(#dg)"/><ellipse cx="125" cy="187" rx="2" ry="2.5" fill="url(#dg)"/><ellipse cx="489" cy="418" rx="1.5" ry="1.7" fill="url(#dg)"/><ellipse cx="446" cy="231" rx="2.5" ry="3.5" fill="url(#dg)"/><ellipse cx="150" cy="188" rx="4" ry="6.0" fill="url(#dg)"/><ellipse cx="332" cy="373" rx="7" ry="9.0" fill="url(#dg)"/><ellipse cx="131" cy="96" rx="2.5" ry="4.0" fill="url(#dg)"/><ellipse cx="430" cy="267" rx="4" ry="6.8" fill="url(#dg)"/><ellipse cx="598" cy="352" rx="1.5" ry="1.7" fill="url(#dg)"/><ellipse cx="451" cy="107" rx="2" ry="2.3" fill="url(#dg)"/><ellipse cx="405" cy="160" rx="7" ry="10.5" fill="url(#dg)"/><ellipse cx="172" cy="102" rx="3" ry="3.4" fill="url(#dg)"/><ellipse cx="113" cy="113" rx="1.5" ry="1.9" fill="url(#dg)"/><ellipse cx="586" cy="409" rx="7" ry="9.1" fill="url(#dg)"/><ellipse cx="21" cy="371" rx="2.5" ry="3.3" fill="url(#dg)"/><ellipse cx="1" cy="160" rx="5" ry="6.3" fill="url(#dg)"/><ellipse cx="400" cy="104" rx="1.5" ry="1.7" fill="url(#dg)"/><ellipse cx="498" cy="60" rx="1.5" ry="2.0" fill="url(#dg)"/><ellipse cx="182" cy="264" rx="2" ry="2.9" fill="url(#dg)"/><ellipse cx="322" cy="315" rx="4" ry="6.2" fill="url(#dg)"/><ellipse cx="439" cy="208" rx="3" ry="4.6" fill="url(#dg)"/><ellipse cx="392" cy="18" rx="7" ry="10.3" fill="url(#dg)"/><ellipse cx="447" cy="341" rx="2" ry="3.3" fill="url(#dg)"/><ellipse cx="458" cy="239" rx="1.5" ry="2.4" fill="url(#dg)"/><ellipse cx="356" cy="375" rx="2.5" ry="2.9" fill="url(#dg)"/><ellipse cx="25" cy="268" rx="2" ry="2.7" fill="url(#dg)"/><ellipse cx="275" cy="21" rx="1.5" ry="2.2" fill="url(#dg)"/><ellipse cx="415" cy="206" rx="1.5" ry="2.1" fill="url(#dg)"/><ellipse cx="43" cy="392" rx="7" ry="8.1" fill="url(#dg)"/><ellipse cx="320" cy="313" rx="5" ry="6.3" fill="url(#dg)"/><ellipse cx="45" cy="112" rx="2.5" ry="3.1" fill="url(#dg)"/><ellipse cx="396" cy="193" rx="4" ry="4.6" fill="url(#dg)"/><ellipse cx="554" cy="121" rx="1.5" ry="2.2" fill="url(#dg)"/><ellipse cx="391" cy="33" rx="2" ry="2.6" fill="url(#dg)"/><ellipse cx="397" cy="291" rx="2" ry="2.2" fill="url(#dg)"/><ellipse cx="37" cy="113" rx="2" ry="3.0" fill="url(#dg)"/><ellipse cx="412" cy="122" rx="7" ry="8.9" fill="url(#dg)"/><ellipse cx="284" cy="322" rx="7" ry="8.5" fill="url(#dg)"/><ellipse cx="596" cy="393" rx="1.5" ry="1.9" fill="url(#dg)"/><ellipse cx="47" cy="213" rx="5" ry="8.5" fill="url(#dg)"/><ellipse cx="236" cy="385" rx="2.5" ry="2.9" fill="url(#dg)"/><ellipse cx="55" cy="314" rx="3" ry="5.0" fill="url(#dg)"/><ellipse cx="81" cy="344" rx="7" ry="8.9" fill="url(#dg)"/><ellipse cx="69" cy="153" rx="5" ry="8.2" fill="url(#dg)"/><ellipse cx="296" cy="10" rx="1.5" ry="2.5" fill="url(#dg)"/><ellipse cx="415" cy="170" rx="2" ry="2.7" fill="url(#dg)"/><ellipse cx="229" cy="51" rx="3" ry="3.3" fill="url(#dg)"/><ellipse cx="457" cy="352" rx="2" ry="3.3" fill="url(#dg)"/><ellipse cx="119" cy="5" rx="3" ry="3.8" fill="url(#dg)"/><ellipse cx="40" cy="164" rx="2" ry="2.6" fill="url(#dg)"/><ellipse cx="261" cy="116" rx="1.5" ry="1.9" fill="url(#dg)"/><ellipse cx="31" cy="278" rx="2" ry="2.5" fill="url(#dg)"/><ellipse cx="162" cy="215" rx="2.5" ry="3.9" fill="url(#dg)"/><ellipse cx="478" cy="180" rx="1.5" ry="2.4" fill="url(#dg)"/><ellipse cx="384" cy="384" rx="7" ry="10.0" fill="url(#dg)"/><ellipse cx="438" cy="21" rx="4" ry="5.5" fill="url(#dg)"/><ellipse cx="458" cy="271" rx="3" ry="4.2" fill="url(#dg)"/><ellipse cx="555" cy="231" rx="2" ry="2.8" fill="url(#dg)"/><ellipse cx="209" cy="125" rx="3" ry="4.0" fill="url(#dg)"/><ellipse cx="145" cy="203" rx="4" ry="4.7" fill="url(#dg)"/><ellipse cx="392" cy="32" rx="7" ry="11.5" fill="url(#dg)"/><ellipse cx="303" cy="92" rx="3" ry="5.1" fill="url(#dg)"/><ellipse cx="274" cy="59" rx="2.5" ry="3.1" fill="url(#dg)"/><ellipse cx="106" cy="233" rx="3" ry="3.7" fill="url(#dg)"/><ellipse cx="157" cy="239" rx="1.5" ry="2.3" fill="url(#dg)"/><ellipse cx="251" cy="174" rx="7" ry="8.6" fill="url(#dg)"/><ellipse cx="165" cy="316" rx="5" ry="6.3" fill="url(#dg)"/><ellipse cx="589" cy="53" rx="7" ry="9.9" fill="url(#dg)"/><ellipse cx="481" cy="356" rx="2" ry="2.5" fill="url(#dg)"/><ellipse cx="151" cy="168" rx="5" ry="6.8" fill="url(#dg)"/><ellipse cx="190" cy="342" rx="1.5" ry="1.8" fill="url(#dg)"/><ellipse cx="259" cy="321" rx="5" ry="8.4" fill="url(#dg)"/><ellipse cx="298" cy="31" rx="7" ry="11.3" fill="url(#dg)"/><ellipse cx="592" cy="104" rx="2" ry="2.5" fill="url(#dg)"/><ellipse cx="93" cy="408" rx="2" ry="3.3" fill="url(#dg)"/><ellipse cx="440" cy="272" rx="5" ry="5.8" fill="url(#dg)"/><ellipse cx="473" cy="1" rx="2" ry="2.5" fill="url(#dg)"/><ellipse cx="560" cy="271" rx="3" ry="5.0" fill="url(#dg)"/><ellipse cx="382" cy="222" rx="4" ry="6.1" fill="url(#dg)"/><ellipse cx="68" cy="30" rx="7" ry="11.7" fill="url(#dg)"/><ellipse cx="117" cy="110" rx="1.5" ry="1.7" fill="url(#dg)"/><ellipse cx="184" cy="193" rx="3" ry="4.5" fill="url(#dg)"/><ellipse cx="538" cy="200" rx="2.5" ry="3.6" fill="url(#dg)"/><ellipse cx="18" cy="173" rx="3" ry="3.4" fill="url(#dg)"/><ellipse cx="118" cy="372" rx="4" ry="4.6" fill="url(#dg)"/><ellipse cx="139" cy="178" rx="3" ry="3.7" fill="url(#dg)"/><ellipse cx="21" cy="142" rx="4" ry="5.3" fill="url(#dg)"/><ellipse cx="241" cy="3" rx="3" ry="4.6" fill="url(#dg)"/><ellipse cx="307" cy="86" rx="2.5" ry="3.2" fill="url(#dg)"/><ellipse cx="499" cy="97" rx="2.5" ry="3.1" fill="url(#dg)"/><ellipse cx="542" cy="46" rx="5" ry="7.3" fill="url(#dg)"/><ellipse cx="546" cy="204" rx="1.5" ry="2.5" fill="url(#dg)"/><ellipse cx="89" cy="165" rx="2.5" ry="2.8" fill="url(#dg)"/><ellipse cx="363" cy="174" rx="1.5" ry="1.8" fill="url(#dg)"/><ellipse cx="274" cy="299" rx="3" ry="4.6" fill="url(#dg)"/><ellipse cx="607" cy="391" rx="3" ry="3.6" fill="url(#dg)"/><ellipse cx="397" cy="220" rx="5" ry="5.6" fill="url(#dg)"/><ellipse cx="405" cy="159" rx="3" ry="5.1" fill="url(#dg)"/><ellipse cx="269" cy="46" rx="2" ry="2.5" fill="url(#dg)"/><ellipse cx="214" cy="401" rx="2" ry="2.9" fill="url(#dg)"/><ellipse cx="462" cy="160" rx="3" ry="4.8" fill="url(#dg)"/><ellipse cx="263" cy="21" rx="5" ry="6.1" fill="url(#dg)"/><ellipse cx="330" cy="187" rx="3" ry="4.0" fill="url(#dg)"/><ellipse cx="546" cy="13" rx="4" ry="5.0" fill="url(#dg)"/><ellipse cx="381" cy="170" rx="4" ry="4.5" fill="url(#dg)"/><ellipse cx="38" cy="386" rx="3" ry="3.7" fill="url(#dg)"/><ellipse cx="38" cy="254" rx="3" ry="3.8" fill="url(#dg)"/><ellipse cx="583" cy="259" rx="3" ry="4.6" fill="url(#dg)"/><ellipse cx="420" cy="388" rx="3" ry="3.3" fill="url(#dg)"/><ellipse cx="460" cy="385" rx="2" ry="2.2" fill="url(#dg)"/><ellipse cx="142" cy="200" rx="5" ry="8.4" fill="url(#dg)"/><ellipse cx="235" cy="105" rx="4" ry="6.4" fill="url(#dg)"/><ellipse cx="81" cy="209" rx="1.5" ry="2.4" fill="url(#dg)"/><ellipse cx="450" cy="346" rx="2" ry="2.9" fill="url(#dg)"/><ellipse cx="200" cy="134" rx="3" ry="4.7" fill="url(#dg)"/><ellipse cx="363" cy="215" rx="4" ry="6.2" fill="url(#dg)"/><ellipse cx="151" cy="27" rx="1.5" ry="2.1" fill="url(#dg)"/><ellipse cx="332" cy="67" rx="4" ry="6.5" fill="url(#dg)"/><ellipse cx="602" cy="111" rx="2" ry="2.5" fill="url(#dg)"/><ellipse cx="256" cy="415" rx="5" ry="6.0" fill="url(#dg)"/><ellipse cx="81" cy="194" rx="2.5" ry="3.9" fill="url(#dg)"/><ellipse cx="516" cy="279" rx="2" ry="3.1" fill="url(#dg)"/><ellipse cx="179" cy="117" rx="3" ry="4.0" fill="url(#dg)"/><ellipse cx="449" cy="84" rx="2.5" ry="3.0" fill="url(#dg)"/><ellipse cx="143" cy="118" rx="2.5" ry="3.2" fill="url(#dg)"/><ellipse cx="241" cy="417" rx="7" ry="9.9" fill="url(#dg)"/><ellipse cx="396" cy="42" rx="5" ry="8.5" fill="url(#dg)"/><ellipse cx="62" cy="199" rx="2.5" ry="4.0" fill="url(#dg)"/><ellipse cx="557" cy="17" rx="3" ry="3.7" fill="url(#dg)"/><ellipse cx="31" cy="252" rx="2.5" ry="4.1" fill="url(#dg)"/><ellipse cx="227" cy="364" rx="5" ry="7.3" fill="url(#dg)"/><ellipse cx="472" cy="279" rx="1.5" ry="1.7" fill="url(#dg)"/><ellipse cx="363" cy="260" rx="2.5" ry="2.8" fill="url(#dg)"/><ellipse cx="207" cy="19" rx="3" ry="3.4" fill="url(#dg)"/><ellipse cx="446" cy="384" rx="1.5" ry="2.4" fill="url(#dg)"/><ellipse cx="249" cy="156" rx="3" ry="3.4" fill="url(#dg)"/><ellipse cx="19" cy="208" rx="5" ry="5.7" fill="url(#dg)"/><ellipse cx="62" cy="166" rx="7" ry="8.3" fill="url(#dg)"/><ellipse cx="325" cy="274" rx="4" ry="6.1" fill="url(#dg)"/><ellipse cx="250" cy="119" rx="3" ry="4.1" fill="url(#dg)"/><ellipse cx="31" cy="313" rx="3" ry="4.0" fill="url(#dg)"/><ellipse cx="11" cy="322" rx="3" ry="4.5" fill="url(#dg)"/><ellipse cx="238" cy="170" rx="1.5" ry="2.0" fill="url(#dg)"/><ellipse cx="95" cy="48" rx="2" ry="2.7" fill="url(#dg)"/><ellipse cx="538" cy="194" rx="2" ry="2.4" fill="url(#dg)"/><ellipse cx="31" cy="60" rx="4" ry="4.6" fill="url(#dg)"/><ellipse cx="379" cy="156" rx="7" ry="8.4" fill="url(#dg)"/><ellipse cx="212" cy="68" rx="2" ry="3.3" fill="url(#dg)"/><ellipse cx="66" cy="206" rx="2.5" ry="3.2" fill="url(#dg)"/><ellipse cx="510" cy="18" rx="5" ry="6.4" fill="url(#dg)"/><ellipse cx="370" cy="267" rx="2" ry="3.3" fill="url(#dg)"/><ellipse cx="378" cy="346" rx="2" ry="3.0" fill="url(#dg)"/><ellipse cx="522" cy="261" rx="2.5" ry="4.0" fill="url(#dg)"/><ellipse cx="111" cy="92" rx="4" ry="6.7" fill="url(#dg)"/><ellipse cx="95" cy="151" rx="2" ry="2.5" fill="url(#dg)"/><ellipse cx="441" cy="377" rx="1.5" ry="2.4" fill="url(#dg)"/><ellipse cx="513" cy="282" rx="3" ry="3.5" fill="url(#dg)"/><ellipse cx="365" cy="231" rx="3" ry="4.5" fill="url(#dg)"/><ellipse cx="188" cy="105" rx="4" ry="6.0" fill="url(#dg)"/><ellipse cx="272" cy="184" rx="1.5" ry="1.7" fill="url(#dg)"/><ellipse cx="601" cy="195" rx="5" ry="7.8" fill="url(#dg)"/><ellipse cx="475" cy="192" rx="2" ry="3.2" fill="url(#dg)"/><ellipse cx="244" cy="28" rx="3" ry="4.1" fill="url(#dg)"/><ellipse cx="535" cy="82" rx="9" ry="15" fill="url(#dg)"/><ellipse cx="578" cy="60" rx="7" ry="11" fill="url(#dg)"/><ellipse cx="556" cy="128" rx="8" ry="12" fill="url(#dg)"/><ellipse cx="486" cy="35" rx="6" ry="9" fill="url(#dg)"/><ellipse cx="420" cy="28" rx="6" ry="9" fill="url(#dg)"/><ellipse cx="568" cy="170" rx="12" ry="18" fill="url(#dg)"/><ellipse cx="520" cy="230" rx="16" ry="22" fill="url(#dg)"/><ellipse cx="300" cy="20" rx="5" ry="8" fill="url(#dg)"/><ellipse cx="128" cy="25" rx="5" ry="8" fill="url(#dg)"/><ellipse cx="40" cy="110" rx="5" ry="8" fill="url(#dg)"/><ellipse cx="585" cy="300" rx="8" ry="12" fill="url(#dg)"/><ellipse cx="470" cy="300" rx="6" ry="9" fill="url(#dg)"/>
<g filter="url(#sh)"><path fill="url(#bl)" d="M271 62.500h289l-26 94H245z"/>
<path fill="#fff" d="M82 33.500h194.500l-2 12 4 5-7 12 3 7-6 11 4 8-8 12 2 8-7 11 2 9-7 9 1 8-6 10-3 10H52z"/></g>
<circle cx="314" cy="504" r="145" fill="#333"/>
<path fill="#ff8a8a" d="M314 504L256.400 371A145 145 0 0 1 314 359z"/>
<path fill="#ff0020" d="M314 504V359a145 145 0 0 1 125.600 72.500z"/>
<path fill="#4b4b52" d="M314 504L256.400 371A145 145 0 0 0 199.400 415z"/>
<path stroke="#111" stroke-width="3.500" d="M294.700 305v55M189 363.500l26 28M499.500 389.500l-36 23"/>
</svg>
<div style="left:978px;top:543px;width:613px;height:1581px;border:3px solid #000;box-sizing:border-box;"></div>
<div style="left:980px;top:546px;width:609px;height:430px;overflow:hidden">
<span class="t" style="left:73.7px;top:41.1px;font-size:108px;color:#f40020;font-weight:700;font-family:'Liberation Serif',serif;font-style:italic;letter-spacing:-8.51px;transform:rotate(-8deg) scaleY(1.42);text-shadow:5px 6px 5px rgba(0,0,0,.3);">Cola</span>
<span class="t" style="left:285px;top:67.8px;font-size:84px;color:#fff;font-weight:700;letter-spacing:-2.0px;-webkit-text-stroke:6px #f00028;paint-order:stroke fill;transform:skewX(-2deg);">WARS</span>
<span class="t" style="left:27.8px;top:175.3px;font-size:73px;color:#0a0a0a;font-weight:700;transform:scaleX(.705);-webkit-text-stroke:3px #0a0a0a;">Who’s Winning?</span>
<span class="t" style="left:119.4px;top:278.4px;font-size:38px;color:#4b4b55;font-weight:700;transform:scaleX(0.68);-webkit-text-stroke:1.500px #4b4b55;">SPRITE</span>
<span class="t" style="left:160.5px;top:322.9px;font-size:38px;color:#4b4b55;font-weight:700;transform:scaleX(0.78);-webkit-text-stroke:1.500px #4b4b55;">8%</span>
<span class="t" style="left:269.5px;top:264.9px;font-size:38px;color:#ff8a8a;font-weight:700;transform:scaleX(0.68);-webkit-text-stroke:1.500px #ff8a8a;">OTHER</span>
<span class="t" style="left:309.5px;top:309.4px;font-size:38px;color:#ff8a8a;font-weight:700;transform:scaleX(0.78);-webkit-text-stroke:1.500px #ff8a8a;">6%</span>
<span class="t" style="left:395.9px;top:299.4px;font-size:38px;color:#f0002a;font-weight:700;transform:scaleX(0.68);-webkit-text-stroke:1.500px #f0002a;">COCA-COLA</span>
<span class="t" style="left:473.5px;top:342.4px;font-size:38px;color:#f0002a;font-weight:700;transform:scaleX(0.78);-webkit-text-stroke:1.500px #f0002a;">40%</span>
<span class="t" style="left:-22.6px;top:383.4px;font-size:38px;color:#b8003a;font-weight:700;transform:scaleX(0.68);-webkit-text-stroke:1.500px #b8003a;">DR. PEPPER</span>
</div>
<svg style="left:980px;top:1992px;" width="609" height="130" viewBox="0 0 609 130"><rect width="609" height="130" fill="#e00000"/><path fill="#a87c50" stroke="#000" stroke-width="7" d="M56 -20h76v44c0 16-8 22-38 22s-38-6-38-22z"/><path fill="#8e6236" stroke="#000" stroke-width="7" d="M165 -20h76v44c0 16-8 22-38 22s-38-6-38-22z"/><path fill="#7a4e22" stroke="#000" stroke-width="7" d="M271 -20h76v44c0 16-8 22-38 22s-38-6-38-22z"/><path fill="#62360f" stroke="#000" stroke-width="7" d="M376 -20h76v44c0 16-8 22-38 22s-38-6-38-22z"/><path fill="#40200a" stroke="#000" stroke-width="7" d="M485 -20h76v44c0 16-8 22-38 22s-38-6-38-22z"/></svg>
<span class="t" style="left:1030.7px;top:2054.6px;font-size:27.5px;color:#000;font-weight:700;letter-spacing:0.46px;-webkit-text-stroke:1.200px #000;transform:scaleX(1.160);">2018</span>
<span class="t" style="left:1139.7px;top:2054.6px;font-size:27.5px;color:#000;font-weight:700;letter-spacing:0.46px;-webkit-text-stroke:1.200px #000;transform:scaleX(1.160);">2019</span>
<span class="t" style="left:1253.7px;top:2054.6px;font-size:27.5px;color:#000;font-weight:700;letter-spacing:0.46px;-webkit-text-stroke:1.200px #000;transform:scaleX(1.160);">2020</span>
<span class="t" style="left:1358.7px;top:2054.6px;font-size:27.5px;color:#000;font-weight:700;letter-spacing:0.46px;-webkit-text-stroke:1.200px #000;transform:scaleX(1.160);">2021</span>
<span class="t" style="left:1470.3px;top:2054.6px;font-size:27.5px;color:#000;font-weight:700;letter-spacing:0.46px;-webkit-text-stroke:1.200px #000;transform:scaleX(1.160);">2022</span>
<div style="left:2253px;top:1244px;width:556px;height:868px;background:#535353;box-shadow:0 0 14px rgba(0,0,0,.55);border:2px solid #383838;box-sizing:border-box;border-radius:6px 6px 0 0;"></div>
<div style="left:2255px;top:1246px;width:552px;height:29px;background:#3c3c3c;border-radius:5px 5px 0 0;"></div>
<div style="left:2255px;top:1275px;width:552px;height:60px;background:#464646;"></div>
<svg style="left:2777px;top:1254px;" width="18" height="13" viewBox="0 0 18 13"><path fill="none" stroke="#d0d0d0" stroke-width="2" d="M8 1L2 6.500 8 12M16 1l-6 5.500L16 12"/></svg>
<div style="left:2780px;top:1299px;width:14px;height:2.5px;background:#cfcfcf;"></div>
<div style="left:2780px;top:1306px;width:14px;height:2.5px;background:#cfcfcf;"></div>
<div style="left:2780px;top:1313px;width:14px;height:2.5px;background:#cfcfcf;"></div>
<div style="left:2262px;top:1342px;width:537px;height:705px;border:2px solid #5d5d5d;box-sizing:border-box;"></div>
<div style="left:2780px;top:1356px;width:10px;height:90px;border:2px solid #5f5f5f;border-left:none;box-sizing:border-box;"></div>
<div style="left:2780px;top:1458px;width:10px;height:72px;border:2px solid #5f5f5f;border-left:none;box-sizing:border-box;"></div>
<div style="left:2780px;top:1548px;width:10px;height:52px;border:2px solid #5f5f5f;border-left:none;box-sizing:border-box;"></div>
<span class="t" style="left:2343px;top:2012.4px;font-size:23px;color:#d4d4d4;letter-spacing:-0.09px;">parent:</span>
<span class="t" style="left:2440px;top:2011.4px;font-size:23px;color:#d4d4d4;">–</span>
<svg style="left:2494px;top:2060px;" width="12" height="26" viewBox="0 0 12 26"><path fill="#777" d="M12 0v26L0 13z"/></svg>
<svg style="left:2555px;top:2060px;" width="12" height="26" viewBox="0 0 12 26"><path fill="#777" d="M0 0v26l12-13z"/></svg>
<div style="left:2255px;top:2094px;width:552px;height:3px;background:#3b3b3b;"></div>
<div style="left:2508px;top:2099px;width:43px;height:9px;background:repeating-linear-gradient(90deg,#3b3b3b 0 2.500px,transparent 2.500px 5px);"></div>
<div style="left:2779px;top:1696px;width:4px;height:14px;background:repeating-linear-gradient(180deg,#ddd 0 3px,transparent 3px 6px);"></div>
<div style="left:0px;top:241px;width:153px;height:1220px;background:#535353;box-shadow:3px 3px 10px rgba(0,0,0,.5);border-right:2px solid #454545;border-bottom:2px solid #454545;box-sizing:border-box;border-radius:0 8px 0 0;"></div>
<div style="left:0px;top:241px;width:153px;height:27.5px;background:#424242;border-radius:0 8px 0 0;"></div>
<svg style="left:7px;top:250px;" width="14" height="14" viewBox="0 0 14 14"><path stroke="#c6c6c6" stroke-width="2.500" d="M1 1l12 12M13 1L1 13"/></svg>
<svg style="left:122px;top:250px;" width="18" height="12" viewBox="0 0 18 12"><path fill="none" stroke="#c6c6c6" stroke-width="1.800" d="M7 1L2 6l5 5M15 1l-5 5 5 5"/></svg>
<div style="left:52px;top:277px;width:43px;height:9px;background:repeating-linear-gradient(90deg,#3b3b3b 0 2.500px,transparent 2.500px 5px);"></div>
<div style="left:9px;top:316px;width:63px;height:49px;background:#2b2b2b;border-radius:5px;"></div>
<svg style="left:18.7px;top:318.7px;" width="44" height="44" viewBox="0 0 44 44"><path stroke="#c6c6c6" fill="none" stroke-width="2.500" stroke-linejoin="miter" d="M12 5v34l9-10h15z"/></svg>
<svg style="left:86.6px;top:318.7px;" width="44" height="44" viewBox="0 0 44 44"><path fill="#c6c6c6" d="M10 4v38l10-12h17z"/></svg>
<svg style="left:128px;top:353.7px;" width="9" height="9" viewBox="0 0 9 9"><path fill="#c6c6c6" d="M9 0v9H0z"/></svg>
<svg style="left:18.7px;top:372.7px;" width="44" height="44" viewBox="0 0 44 44"><path stroke="#c6c6c6" stroke-width="5" d="M6 40L28 18"/><path stroke="#535353" stroke-width="1.500" d="M22 20l5 5"/><path fill="#c6c6c6" d="M14 6l2 5 5 2-5 2-2 5-2-5-5-2 5-2zM32 2l1.500 4 4 1.500-4 1.500L32 13l-1.500-4-4-1.500 4-1.500zM35 17l1.200 3 3 1.200-3 1.200L35 25.500l-1.200-3-3-1.200 3-1.200z"/></svg>
<svg style="left:86.6px;top:372.7px;" width="44" height="44" viewBox="0 0 44 44"><path stroke="#c6c6c6" fill="none" stroke-width="2.200" d="M17 24c-9-2-11-10-6-15 6-6 20-6 25 0 3 4 2 9-1 12M17 24c-5-1-7 4-4 6 4 2 7-3 3-6M16 30c1 4 0 7-3 9"/><path fill="#c6c6c6" d="M22 12v30l8-9h13z"/></svg>
<svg style="left:18.7px;top:426.7px;" width="44" height="44" viewBox="0 0 44 44"><path fill="#c6c6c6" d="M26 6l12 12-5 5-12-12zM19 13l12 12-4 9-22 6 6-22z"/><path stroke="#535353" stroke-width="2" d="M6 39l12-12"/><circle cx="19" cy="26" r="2.500" fill="#535353"/></svg>
<svg style="left:62.7px;top:461.7px;" width="9" height="9" viewBox="0 0 9 9"><path fill="#c6c6c6" d="M9 0v9H0z"/></svg>
<svg style="left:83.6px;top:426.7px;" width="54" height="44" viewBox="0 0 54 44"><g transform="translate(9,0)"><path fill="#c6c6c6" d="M26 6l12 12-5 5-12-12zM19 13l12 12-4 9-22 6 6-22z"/><path stroke="#535353" stroke-width="2" d="M6 39l12-12"/><circle cx="19" cy="26" r="2.500" fill="#535353"/></g><path stroke="#c6c6c6" fill="none" stroke-width="2.200" stroke-linecap="round" d="M5 5c9 7 3 13 0 19s1 13 8 13"/></svg>
<svg style="left:18.7px;top:480.7px;" width="44" height="44" viewBox="0 0 44 44"><path fill="#c6c6c6" d="M5 6h32v9h-4v-4H24.500v24h5v4h-17v-4h5V11H9v4H5z"/></svg>
<svg style="left:62.7px;top:515.7px;" width="9" height="9" viewBox="0 0 9 9"><path fill="#c6c6c6" d="M9 0v9H0z"/></svg>
<svg style="left:86.6px;top:480.7px;" width="44" height="44" viewBox="0 0 44 44"><path stroke="#c6c6c6" stroke-width="3.500" stroke-linecap="round" d="M6 38L38 6"/></svg>
<svg style="left:128px;top:515.7px;" width="9" height="9" viewBox="0 0 9 9"><path fill="#c6c6c6" d="M9 0v9H0z"/></svg>
<svg style="left:18.7px;top:534.7px;" width="44" height="44" viewBox="0 0 44 44"><rect x="4" y="6" width="35" height="31" fill="#6e6e6e" stroke="#c6c6c6" stroke-width="2.500"/></svg>
<svg style="left:62.7px;top:569.7px;" width="9" height="9" viewBox="0 0 9 9"><path fill="#c6c6c6" d="M9 0v9H0z"/></svg>
<svg style="left:86.6px;top:534.7px;" width="44" height="44" viewBox="0 0 44 44"><path fill="#c6c6c6" d="M38 3c3 0 2 5-1 9L24 27l-5-4L33 7c2-2 3-4 5-4zM17 25l5 4c1 8-8 12-18 10 5-2 4-6 6-10 2-3 5-4 7-4z"/></svg>
<svg style="left:128px;top:569.7px;" width="9" height="9" viewBox="0 0 9 9"><path fill="#c6c6c6" d="M9 0v9H0z"/></svg>
<svg style="left:16.7px;top:588.7px;" width="48" height="44" viewBox="0 0 48 44"><path d="M24 8a15 15 0 1 0-6 28z" fill="#6e6e6e"/><path stroke="#c6c6c6" fill="none" stroke-width="2.500" d="M14 36A15 15 0 1 1 30 12"/><path fill="#c6c6c6" d="M37 8l5 5-22 24-9 5 3-9z"/></svg>
<svg style="left:62.7px;top:623.7px;" width="9" height="9" viewBox="0 0 9 9"><path fill="#c6c6c6" d="M9 0v9H0z"/></svg>
<svg style="left:86.6px;top:588.7px;" width="44" height="44" viewBox="0 0 44 44"><g stroke="#c6c6c6" fill="none" stroke-width="2.800"><circle cx="34" cy="9" r="6"/><circle cx="34" cy="36" r="6"/></g><path fill="#c6c6c6" d="M2 10c10 2 20 8 28 16l-3 4C20 24 12 18 2 14zM2 34c10-2 20-8 28-16l2 3C22 28 12 34 2 38z"/></svg>
<svg style="left:128px;top:623.7px;" width="9" height="9" viewBox="0 0 9 9"><path fill="#c6c6c6" d="M9 0v9H0z"/></svg>
<svg style="left:18.7px;top:642.7px;" width="44" height="44" viewBox="0 0 44 44"><path stroke="#c6c6c6" fill="none" stroke-width="2.500" d="M5 8v28l13-14z"/><path fill="#c6c6c6" d="M40 8v28L26 22z"/><path stroke="#c6c6c6" stroke-width="2" stroke-dasharray="2.500 2.500" d="M22 2v40"/></svg>
<svg style="left:62.7px;top:677.7px;" width="9" height="9" viewBox="0 0 9 9"><path fill="#c6c6c6" d="M9 0v9H0z"/></svg>
<svg style="left:86.6px;top:642.7px;" width="44" height="44" viewBox="0 0 44 44"><g stroke="#c6c6c6" fill="none" stroke-width="2.500"><rect x="13" y="3" width="28" height="26"/><rect x="3" y="20" width="20" height="20"/></g><path fill="#c6c6c6" d="M36 7v10l-3-3-7 7-3-3 7-7-3-3z"/></svg>
<svg style="left:128px;top:677.7px;" width="9" height="9" viewBox="0 0 9 9"><path fill="#c6c6c6" d="M9 0v9H0z"/></svg>
<svg style="left:18.7px;top:696.7px;" width="44" height="44" viewBox="0 0 44 44"><path fill="#c6c6c6" d="M12 3c8 4 4 12 9 16 6 4 12-6 20-2 3 2 3 8 2 10-1-4-3-6-6-5-6 2-8 10-16 10-5 0-9-3-9-8 0-6 5-7 5-12 0-3-2-6-5-9z"/><g stroke="#c6c6c6" fill="none" stroke-width="2"><path d="M6 38L30 10"/><circle cx="5" cy="39" r="3.500"/><circle cx="31" cy="9" r="3.500"/><circle cx="17" cy="25" r="4"/></g></svg>
<svg style="left:62.7px;top:731.7px;" width="9" height="9" viewBox="0 0 9 9"><path fill="#c6c6c6" d="M9 0v9H0z"/></svg>
<svg style="left:86.6px;top:696.7px;" width="44" height="44" viewBox="0 0 44 44"><path stroke="#c6c6c6" stroke-width="2" stroke-dasharray="5 3" fill="none" d="M16 8h24v26H16"/><g fill="#c6c6c6"><rect x="13" y="5" width="6" height="6"/><rect x="37" y="5" width="6" height="6"/><rect x="13" y="31" width="6" height="6"/><rect x="37" y="31" width="6" height="6"/><rect x="26" y="5" width="5" height="5"/><rect x="26" y="32" width="5" height="5"/><rect x="38" y="18" width="5" height="5"/><path d="M2 2v28l8-9h13z"/></g></svg>
<svg style="left:128px;top:731.7px;" width="9" height="9" viewBox="0 0 9 9"><path fill="#c6c6c6" d="M9 0v9H0z"/></svg>
<svg style="left:16.7px;top:750.7px;" width="48" height="44" viewBox="0 0 48 44"><g stroke="#c6c6c6" fill="none" stroke-width="2.200"><circle cx="14" cy="18" r="11"/><circle cx="23" cy="18" r="12"/></g><path stroke="#c6c6c6" stroke-width="2.500" stroke-dasharray="2.500 2.500" d="M8 19h18"/><path fill="#c6c6c6" d="M27 16v25l7-8h11z"/></svg>
<svg style="left:62.7px;top:785.7px;" width="9" height="9" viewBox="0 0 9 9"><path fill="#c6c6c6" d="M9 0v9H0z"/></svg>
<svg style="left:86.6px;top:750.7px;" width="44" height="44" viewBox="0 0 44 44"><g stroke="#c6c6c6" fill="none" stroke-width="2.200"><path d="M3 3v36l22-14V11zM10 6v28M17 8.500v21M3 15l22 3M3 27l22-4"/></g><g stroke="#8c8c8c" stroke-width="2"><path d="M27 20h10M25 27h16M20 33h24M8 39h36"/></g></svg>
<svg style="left:128px;top:785.7px;" width="9" height="9" viewBox="0 0 9 9"><path fill="#c6c6c6" d="M9 0v9H0z"/></svg>
<svg style="left:18.7px;top:804.7px;" width="44" height="44" viewBox="0 0 44 44"><g stroke="#c6c6c6" fill="none" stroke-width="2.500"><rect x="4" y="6" width="35" height="31"/><path d="M4 18c10-6 20 4 35-4M4 30c12-8 22 2 35-3M14 6c8 10-2 20 4 31M28 6c8 12-4 20 2 31"/></g></svg>
<svg style="left:90.6px;top:810.7px;" width="36" height="32" viewBox="0 0 36 32"><defs><linearGradient id="gt"><stop offset="0" stop-color="#2a2a2a"/><stop offset="1" stop-color="#d8d8d8"/></linearGradient></defs><rect x="1.500" y="1.500" width="33" height="29" fill="url(#gt)" stroke="#c6c6c6" stroke-width="2.500"/></svg>
<svg style="left:18.7px;top:858.7px;" width="44" height="44" viewBox="0 0 44 44"><path fill="#c6c6c6" d="M31 3c4-2 9 3 7 7l-5 6 2 2-3 3-9-9 3-3 2 2z"/><path stroke="#c6c6c6" fill="none" stroke-width="2.500" d="M24 16L7 33c-2 2-3 6-1 7s5 0 7-2l17-17"/></svg>
<svg style="left:62.7px;top:893.7px;" width="9" height="9" viewBox="0 0 9 9"><path fill="#c6c6c6" d="M9 0v9H0z"/></svg>
<svg style="left:86.6px;top:858.7px;" width="44" height="44" viewBox="0 0 44 44"><rect x="2" y="5" width="17" height="17" fill="#c6c6c6"/><rect x="13" y="13" width="17" height="18" rx="7" fill="#8c8c8c" stroke="#c6c6c6" stroke-width="2"/><circle cx="33" cy="28" r="8" fill="#535353" stroke="#c6c6c6" stroke-width="2.500"/></svg>
<svg style="left:18.7px;top:912.7px;" width="44" height="44" viewBox="0 0 44 44"><g fill="#c6c6c6"><circle cx="4" cy="6" r="2.200"/><circle cx="11" cy="6" r="2.200"/><circle cx="18" cy="6" r="2.200"/><circle cx="4" cy="13" r="2.200"/><circle cx="11" cy="13" r="2.200"/><circle cx="4" cy="20" r="2.200"/><rect x="26" y="3" width="10" height="7"/></g><g stroke="#c6c6c6" fill="none" stroke-width="2.500"><rect x="20" y="12" width="21" height="26"/><circle cx="30.500" cy="25" r="5"/></g></svg>
<svg style="left:62.7px;top:947.7px;" width="9" height="9" viewBox="0 0 9 9"><path fill="#c6c6c6" d="M9 0v9H0z"/></svg>
<svg style="left:86.6px;top:912.7px;" width="44" height="44" viewBox="0 0 44 44"><path stroke="#c6c6c6" fill="none" stroke-width="2.500" d="M3 3v34h40"/><g fill="#c6c6c6"><rect x="10" y="20" width="8" height="16"/><rect x="22" y="6" width="8" height="30"/><rect x="34" y="13" width="8" height="23"/></g></svg>
<svg style="left:128px;top:947.7px;" width="9" height="9" viewBox="0 0 9 9"><path fill="#c6c6c6" d="M9 0v9H0z"/></svg>
<svg style="left:18.7px;top:966.7px;" width="44" height="44" viewBox="0 0 44 44"><path stroke="#c6c6c6" stroke-width="2" d="M12 0v14M0 11h10"/><path fill="#6e6e6e" stroke="#c6c6c6" stroke-width="2.500" d="M13 15h18l8 8v15H13z"/></svg>
<svg style="left:86.6px;top:966.7px;" width="44" height="44" viewBox="0 0 44 44"><path stroke="#c6c6c6" fill="none" stroke-width="2.200" d="M4 40l16-26 10 8zM12 30l12-12"/><path fill="#c6c6c6" d="M25 5l12 10-7 8-10-8z"/></svg>
<svg style="left:128px;top:1001.7px;" width="9" height="9" viewBox="0 0 9 9"><path fill="#c6c6c6" d="M9 0v9H0z"/></svg>
<svg style="left:18.7px;top:1020.7px;" width="44" height="44" viewBox="0 0 44 44"><path fill="#c6c6c6" d="M14 40C9 32 5 28 2 24c-2-3 1-5 4-3l5 5-3-17c0-3 4-3 5 0l3 11V5c0-3 5-3 5 0v14l3-12c1-3 5-2 4 1l-2 13 4-8c2-3 5-1 4 2l-5 16c-1 4-3 7-5 9z"/></svg>
<svg style="left:62.7px;top:1055.7px;" width="9" height="9" viewBox="0 0 9 9"><path fill="#c6c6c6" d="M9 0v9H0z"/></svg>
<svg style="left:86.6px;top:1020.7px;" width="44" height="44" viewBox="0 0 44 44"><circle cx="17" cy="17" r="12.500" stroke="#c6c6c6" fill="none" stroke-width="3"/><path stroke="#c6c6c6" stroke-width="4.500" stroke-linecap="round" d="M27 27l13 13"/></svg>
<div style="left:8px;top:1074px;width:134px;height:2px;background:#484848;"></div>
<div style="left:48px;top:1127px;width:80px;height:80px;background:#000;border:2px solid #e0e0e0;box-sizing:border-box;"></div>
<div style="left:67px;top:1146px;width:42px;height:40px;background:#535353;border:2px solid #e0e0e0;box-sizing:border-box;"></div>
<div style="left:7px;top:1085px;width:80px;height:80px;background:#fff;border:2px solid #5a5a5a;box-sizing:border-box;"></div>
<svg style="left:105px;top:1084px;" width="32" height="30" viewBox="0 0 32 30"><path stroke="#c6c6c6" fill="none" stroke-width="4" d="M9 8c9-2 15 4 15 14"/><path fill="#c6c6c6" d="M2 8l10-8v16zM24 28l-8-9h16z"/></svg>
<svg style="left:7px;top:1177px;" width="28" height="28" viewBox="0 0 28 28"><rect x="10" y="10" width="16" height="16" fill="#000" stroke="#c6c6c6" stroke-width="2"/><rect x="1" y="1" width="16" height="16" fill="#fff" stroke="#222" stroke-width="2"/></svg>
<div style="left:8px;top:1220px;width:40px;height:44px;background:#2e2e2e;border:1.500px solid #5c5c5c;box-sizing:border-box;"></div>
<div style="left:50px;top:1220px;width:44px;height:44px;border:1.500px solid #5c5c5c;box-sizing:border-box;"></div>
<div style="left:95px;top:1220px;width:44px;height:44px;border:1.500px solid #5c5c5c;box-sizing:border-box;"></div>
<div style="left:13px;top:1228px;width:30px;height:29px;background:#fff;border:2px solid #111;box-sizing:border-box;"></div>
<div style="left:58px;top:1228px;width:30px;height:29px;background:linear-gradient(90deg,#fff,#222);border:2px solid #111;box-sizing:border-box;"></div>
<div style="left:103px;top:1228px;width:30px;height:29px;background:linear-gradient(135deg,#fff 40%,#f00 40% 60%,#fff 60%);border:2px solid #111;box-sizing:border-box;"></div>
<div style="left:8px;top:1277px;width:40px;height:40px;background:#2e2e2e;border:1.500px solid #5c5c5c;box-sizing:border-box;"></div>
<div style="left:50px;top:1277px;width:44px;height:40px;border:1.500px solid #5c5c5c;box-sizing:border-box;"></div>
<div style="left:95px;top:1277px;width:44px;height:40px;border:1.500px solid #5c5c5c;box-sizing:border-box;"></div>
<svg style="left:16px;top:1285px;" width="26" height="26" viewBox="0 0 26 26"><rect x="10" y="11" width="13" height="13" fill="#c6c6c6"/><circle cx="10" cy="10" r="8" fill="#8a8a8a" stroke="#c6c6c6" stroke-width="2"/><rect x="11" y="12" width="11" height="11" fill="#c6c6c6"/></svg>
<svg style="left:61px;top:1285px;" width="26" height="26" viewBox="0 0 26 26"><rect x="10" y="11" width="13" height="13" fill="#c6c6c6"/><circle cx="10" cy="10" r="8" fill="#666" stroke="#c6c6c6" stroke-width="2"/></svg>
<svg style="left:106px;top:1285px;" width="26" height="26" viewBox="0 0 26 26"><circle cx="11" cy="11" r="8" fill="none" stroke="#777" stroke-width="2"/><path fill="#777" d="M11 11h8a8 8 0 0 1-8 8z"/></svg>
<svg style="left:48px;top:1335px;" width="52" height="38" viewBox="0 0 52 38"><rect x="1.500" y="12" width="32" height="24" fill="#6e6e6e" stroke="#c6c6c6" stroke-width="3"/><rect x="21" y="1.500" width="29" height="22" fill="#6e6e6e" stroke="#c6c6c6" stroke-width="3"/></svg>
<div style="left:58px;top:1421px;width:8px;height:8px;background:#c6c6c6;border-radius:50%;"></div>
<div style="left:70.5px;top:1421px;width:8px;height:8px;background:#c6c6c6;border-radius:50%;"></div>
<div style="left:83px;top:1421px;width:8px;height:8px;background:#c6c6c6;border-radius:50%;"></div>
<div style="left:272px;top:86px;width:596.5px;height:1431.5px;background:#b3afb0;border-radius:13px;box-shadow:0 14px 40px rgba(0,0,0,.42),0 0 0 1px rgba(60,60,60,.35);"></div>
<span class="t" style="left:304.8px;top:108.2px;font-size:29.5px;color:#1b1b1b;letter-spacing:-0.08px;">New...</span>
<span class="t" style="left:808.5px;top:108.4px;font-size:29px;color:#7d797b;">N</span>
<svg style="left:772px;top:111px;" width="24" height="24" viewBox="0 0 24 24"><path fill="none" stroke="#7d797b" stroke-width="2.400" d="M8 8h8v8H8zM8 8V5.500A3 3 0 1 0 5 8.500h3M16 8V5.500a3 3 0 1 1 3 3h-3M8 16v2.500A3 3 0 1 1 5 15.500h3M16 16v2.500a3 3 0 1 0 3-3h-3"/></svg>
<span class="t" style="left:304.8px;top:157.7px;font-size:29.5px;color:#1b1b1b;letter-spacing:0.39px;">New from Template...</span>
<span class="t" style="left:808.5px;top:157.9px;font-size:29px;color:#7d797b;">N</span>
<svg style="left:772px;top:160.5px;" width="24" height="24" viewBox="0 0 24 24"><path fill="none" stroke="#7d797b" stroke-width="2.400" d="M8 8h8v8H8zM8 8V5.500A3 3 0 1 0 5 8.500h3M16 8V5.500a3 3 0 1 1 3 3h-3M8 16v2.500A3 3 0 1 1 5 15.500h3M16 16v2.500a3 3 0 1 0 3-3h-3"/></svg>
<svg style="left:740.5px;top:160.5px;" width="26" height="24" viewBox="0 0 26 24"><path fill="none" stroke="#7d797b" stroke-width="2.400" stroke-linejoin="round" d="M13 2L2 13h6v9h10v-9h6z"/></svg>
<span class="t" style="left:304.8px;top:207.2px;font-size:29.5px;color:#1b1b1b;letter-spacing:-0.25px;">Open...</span>
<span class="t" style="left:807.7px;top:207.4px;font-size:29px;color:#7d797b;">O</span>
<svg style="left:772px;top:210px;" width="24" height="24" viewBox="0 0 24 24"><path fill="none" stroke="#7d797b" stroke-width="2.400" d="M8 8h8v8H8zM8 8V5.500A3 3 0 1 0 5 8.500h3M16 8V5.500a3 3 0 1 1 3 3h-3M8 16v2.500A3 3 0 1 1 5 15.500h3M16 16v2.500a3 3 0 1 0 3-3h-3"/></svg>
<span class="t" style="left:304.8px;top:256.7px;font-size:29.5px;color:#1b1b1b;letter-spacing:0.1px;">Open Recent Files</span>
<svg style="left:812px;top:260.5px;" width="14" height="22" viewBox="0 0 14 22"><path fill="none" stroke="#222" stroke-width="3.200" stroke-linecap="round" stroke-linejoin="round" d="M3 3l8 8-8 8"/></svg>
<span class="t" style="left:304.8px;top:306.2px;font-size:29.5px;color:#1b1b1b;letter-spacing:0.23px;">Browse in Bridge...</span>
<span class="t" style="left:807.7px;top:306.4px;font-size:29px;color:#7d797b;">O</span>
<svg style="left:772px;top:309px;" width="24" height="24" viewBox="0 0 24 24"><path fill="none" stroke="#7d797b" stroke-width="2.400" d="M8 8h8v8H8zM8 8V5.500A3 3 0 1 0 5 8.500h3M16 8V5.500a3 3 0 1 1 3 3h-3M8 16v2.500A3 3 0 1 1 5 15.500h3M16 16v2.500a3 3 0 1 0 3-3h-3"/></svg>
<svg style="left:741.5px;top:310px;" width="24" height="22" viewBox="0 0 24 22"><path fill="none" stroke="#7d797b" stroke-width="2.400" d="M1 2h7l9 18h7M15 2h9"/></svg>
<div style="left:303px;top:356.5px;width:533px;height:2px;background:#9a9697;"></div>
<span class="t" style="left:304.8px;top:380.2px;font-size:29.5px;color:#1b1b1b;letter-spacing:-0.08px;">Close</span>
<span class="t" style="left:805.3px;top:380.4px;font-size:29px;color:#7d797b;">W</span>
<svg style="left:772px;top:383px;" width="24" height="24" viewBox="0 0 24 24"><path fill="none" stroke="#7d797b" stroke-width="2.400" d="M8 8h8v8H8zM8 8V5.500A3 3 0 1 0 5 8.500h3M16 8V5.500a3 3 0 1 1 3 3h-3M8 16v2.500A3 3 0 1 1 5 15.500h3M16 16v2.500a3 3 0 1 0 3-3h-3"/></svg>
<span class="t" style="left:304.8px;top:429.7px;font-size:29.5px;color:#1b1b1b;letter-spacing:0.25px;">Close All</span>
<span class="t" style="left:805.3px;top:429.9px;font-size:29px;color:#7d797b;">W</span>
<svg style="left:772px;top:432.5px;" width="24" height="24" viewBox="0 0 24 24"><path fill="none" stroke="#7d797b" stroke-width="2.400" d="M8 8h8v8H8zM8 8V5.500A3 3 0 1 0 5 8.500h3M16 8V5.500a3 3 0 1 1 3 3h-3M8 16v2.500A3 3 0 1 1 5 15.500h3M16 16v2.500a3 3 0 1 0 3-3h-3"/></svg>
<svg style="left:741.5px;top:433.5px;" width="24" height="22" viewBox="0 0 24 22"><path fill="none" stroke="#7d797b" stroke-width="2.400" d="M1 2h7l9 18h7M15 2h9"/></svg>
<span class="t" style="left:304.8px;top:479.2px;font-size:29.5px;color:#1b1b1b;letter-spacing:-0.81px;">Save</span>
<span class="t" style="left:809.3px;top:479.4px;font-size:29px;color:#7d797b;">S</span>
<svg style="left:772px;top:482px;" width="24" height="24" viewBox="0 0 24 24"><path fill="none" stroke="#7d797b" stroke-width="2.400" d="M8 8h8v8H8zM8 8V5.500A3 3 0 1 0 5 8.500h3M16 8V5.500a3 3 0 1 1 3 3h-3M8 16v2.500A3 3 0 1 1 5 15.500h3M16 16v2.500a3 3 0 1 0 3-3h-3"/></svg>
<span class="t" style="left:304.8px;top:578.2px;font-size:29.5px;color:#1b1b1b;letter-spacing:-0.16px;">Save a Copy...</span>
<span class="t" style="left:809.3px;top:578.4px;font-size:29px;color:#7d797b;">S</span>
<svg style="left:772px;top:581px;" width="24" height="24" viewBox="0 0 24 24"><path fill="none" stroke="#7d797b" stroke-width="2.400" d="M8 8h8v8H8zM8 8V5.500A3 3 0 1 0 5 8.500h3M16 8V5.500a3 3 0 1 1 3 3h-3M8 16v2.500A3 3 0 1 1 5 15.500h3M16 16v2.500a3 3 0 1 0 3-3h-3"/></svg>
<svg style="left:741.5px;top:582px;" width="24" height="22" viewBox="0 0 24 22"><path fill="none" stroke="#7d797b" stroke-width="2.400" d="M1 2h7l9 18h7M15 2h9"/></svg>
<span class="t" style="left:304.8px;top:627.7px;font-size:29.5px;color:#8a8688;letter-spacing:0.14px;">Save Selected Slices...</span>
<span class="t" style="left:304.8px;top:677.2px;font-size:29.5px;color:#1b1b1b;letter-spacing:0.44px;">Version History</span>
<span class="t" style="left:304.8px;top:726.7px;font-size:29.5px;color:#1b1b1b;letter-spacing:0.08px;">Save as Template...</span>
<span class="t" style="left:304.8px;top:776.2px;font-size:29.5px;color:#1b1b1b;letter-spacing:-0.15px;">Revert</span>
<span class="t" style="left:800.7px;top:780.9px;font-size:22px;color:#7d797b;letter-spacing:-1.3px;">F12</span>
<span class="t" style="left:304.8px;top:825.7px;font-size:29.5px;color:#1b1b1b;letter-spacing:0.34px;">Search Adobe Stock...</span>
<span class="t" style="left:304.8px;top:875.2px;font-size:29.5px;color:#1b1b1b;letter-spacing:-0.17px;">Place...</span>
<span class="t" style="left:809.3px;top:875.4px;font-size:29px;color:#7d797b;">P</span>
<svg style="left:772px;top:878px;" width="24" height="24" viewBox="0 0 24 24"><path fill="none" stroke="#7d797b" stroke-width="2.400" d="M8 8h8v8H8zM8 8V5.500A3 3 0 1 0 5 8.500h3M16 8V5.500a3 3 0 1 1 3 3h-3M8 16v2.500A3 3 0 1 1 5 15.500h3M16 16v2.500a3 3 0 1 0 3-3h-3"/></svg>
<svg style="left:740.5px;top:878px;" width="26" height="24" viewBox="0 0 26 24"><path fill="none" stroke="#7d797b" stroke-width="2.400" stroke-linejoin="round" d="M13 2L2 13h6v9h10v-9h6z"/></svg>
<div style="left:303px;top:925px;width:533px;height:2px;background:#9a9697;"></div>
<span class="t" style="left:304.8px;top:949.2px;font-size:29.5px;color:#1b1b1b;letter-spacing:0.3px;">Invite to Edit...</span>
<span class="t" style="left:304.8px;top:998.7px;font-size:29.5px;color:#1b1b1b;letter-spacing:0.07px;">Share For Review (Beta)...</span>
<span class="t" style="left:304.8px;top:1048.2px;font-size:29.5px;color:#1b1b1b;letter-spacing:0.29px;">Export</span>
<svg style="left:812px;top:1052px;" width="14" height="22" viewBox="0 0 14 22"><path fill="none" stroke="#222" stroke-width="3.200" stroke-linecap="round" stroke-linejoin="round" d="M3 3l8 8-8 8"/></svg>
<span class="t" style="left:304.8px;top:1097.7px;font-size:29.5px;color:#8a8688;letter-spacing:0.4px;">Export Selection...</span>
<div style="left:303px;top:1148px;width:533px;height:2px;background:#9a9697;"></div>
<span class="t" style="left:304.8px;top:1171.7px;font-size:29.5px;color:#1b1b1b;letter-spacing:-0.04px;">Package...</span>
<span class="t" style="left:809.3px;top:1171.9px;font-size:29px;color:#7d797b;">P</span>
<svg style="left:772px;top:1174.5px;" width="24" height="24" viewBox="0 0 24 24"><path fill="none" stroke="#7d797b" stroke-width="2.400" d="M8 8h8v8H8zM8 8V5.500A3 3 0 1 0 5 8.500h3M16 8V5.500a3 3 0 1 1 3 3h-3M8 16v2.500A3 3 0 1 1 5 15.500h3M16 16v2.500a3 3 0 1 0 3-3h-3"/></svg>
<svg style="left:740.5px;top:1174.5px;" width="26" height="24" viewBox="0 0 26 24"><path fill="none" stroke="#7d797b" stroke-width="2.400" stroke-linejoin="round" d="M13 2L2 13h6v9h10v-9h6z"/></svg>
<svg style="left:711px;top:1175.5px;" width="24" height="22" viewBox="0 0 24 22"><path fill="none" stroke="#7d797b" stroke-width="2.400" d="M1 2h7l9 18h7M15 2h9"/></svg>
<span class="t" style="left:304.8px;top:1221.2px;font-size:29.5px;color:#1b1b1b;letter-spacing:0.55px;">Scripts</span>
<svg style="left:812px;top:1225px;" width="14" height="22" viewBox="0 0 14 22"><path fill="none" stroke="#222" stroke-width="3.200" stroke-linecap="round" stroke-linejoin="round" d="M3 3l8 8-8 8"/></svg>
<div style="left:303px;top:1271.5px;width:533px;height:2px;background:#9a9697;"></div>
<span class="t" style="left:304.8px;top:1295.2px;font-size:29.5px;color:#1b1b1b;letter-spacing:0.39px;">Document Setup...</span>
<span class="t" style="left:304.8px;top:1344.7px;font-size:29.5px;color:#1b1b1b;letter-spacing:0.52px;">Document Color Mode</span>
<svg style="left:812px;top:1348.5px;" width="14" height="22" viewBox="0 0 14 22"><path fill="none" stroke="#222" stroke-width="3.200" stroke-linecap="round" stroke-linejoin="round" d="M3 3l8 8-8 8"/></svg>
<span class="t" style="left:304.8px;top:1394.2px;font-size:29.5px;color:#1b1b1b;letter-spacing:0.04px;">File Info...</span>
<div style="left:303px;top:1444.5px;width:533px;height:2px;background:#9a9697;"></div>
<span class="t" style="left:304.8px;top:1468.2px;font-size:29.5px;color:#1b1b1b;letter-spacing:0.34px;">Print...</span>
<span class="t" style="left:809.3px;top:1468.4px;font-size:29px;color:#7d797b;">P</span>
<svg style="left:772px;top:1471px;" width="24" height="24" viewBox="0 0 24 24"><path fill="none" stroke="#7d797b" stroke-width="2.400" d="M8 8h8v8H8zM8 8V5.500A3 3 0 1 0 5 8.500h3M16 8V5.500a3 3 0 1 1 3 3h-3M8 16v2.500A3 3 0 1 1 5 15.500h3M16 16v2.500a3 3 0 1 0 3-3h-3"/></svg>
<svg style="left:0px;top:0px;pointer-events:none;" width="3300" height="2328" viewBox="0 0 3300 2328"><defs><linearGradient id="bm" gradientUnits="userSpaceOnUse" x1="298.5" y1="441.3" x2="1260.0" y2="1863.0"><stop offset="0.000" stop-color="rgb(255, 0, 255)" stop-opacity="0.000"/><stop offset="0.097" stop-color="rgb(254, 0, 254)" stop-opacity="0.017"/><stop offset="0.189" stop-color="rgb(252, 0, 251)" stop-opacity="0.062"/><stop offset="0.284" stop-color="rgb(248, 0, 246)" stop-opacity="0.140"/><stop offset="0.379" stop-color="rgb(242, 0, 239)" stop-opacity="0.250"/><stop offset="0.473" stop-color="rgb(235, 0, 230)" stop-opacity="0.390"/><stop offset="0.568" stop-color="rgb(226, 0, 220)" stop-opacity="0.562"/><stop offset="0.662" stop-color="rgb(216, 0, 207)" stop-opacity="0.765"/><stop offset="0.757" stop-color="rgb(204, 0, 192)" stop-opacity="1.000"/><stop offset="0.843" stop-color="rgb(238, 0, 225)" stop-opacity="1"/><stop offset="1.000" stop-color="rgb(250, 0, 240)" stop-opacity="1"/></linearGradient><linearGradient id="bm2" gradientUnits="userSpaceOnUse" x1="298.5" y1="441.3" x2="1260.0" y2="1863.0"><stop offset="0.000" stop-color="#ff00f6" stop-opacity="0.000"/><stop offset="0.097" stop-color="#ff00f6" stop-opacity="0.013"/><stop offset="0.189" stop-color="#ff00f6" stop-opacity="0.050"/><stop offset="0.284" stop-color="#ff00f6" stop-opacity="0.112"/><stop offset="0.379" stop-color="#ff00f6" stop-opacity="0.200"/><stop offset="0.473" stop-color="#ff00f6" stop-opacity="0.312"/><stop offset="0.568" stop-color="#ff00f6" stop-opacity="0.450"/><stop offset="0.662" stop-color="#ff00f6" stop-opacity="0.612"/><stop offset="0.757" stop-color="#ff00f6" stop-opacity="0.800"/><stop offset="1" stop-color="#ff00f6" stop-opacity=".9"/></linearGradient><clipPath id="cm"><rect x="272" y="86" width="596.500" height="1431.500" rx="13"/><rect x="980" y="546" width="609" height="430"/></clipPath><clipPath id="co"><path clip-rule="evenodd" d="M0 0H3300V2328H0zM272 86h596.500v1431.500H272zM980 546h609v430H980z"/></clipPath></defs><path clip-path="url(#co)" fill="url(#bm)" d="M856 528L2769 960.700V1992H869L281 567z"/><path clip-path="url(#cm)" fill="url(#bm2)" d="M856 528L2769 960.700V1992H869L281 567z"/></svg>
<div style="left:273.5px;top:516px;width:583px;height:55px;background:#1c7ae6;border:7.500px solid #ff00ff;border-radius:12px 12px 12px 6px;box-sizing:border-box;"></div>
<span class="t" style="left:304.8px;top:528.7px;font-size:29.5px;color:#fff;letter-spacing:-0.28px;">Save As...</span>
<span class="t" style="left:809.3px;top:528.9px;font-size:29px;color:#fff;">S</span>
<svg style="left:772px;top:531.5px;" width="24" height="24" viewBox="0 0 24 24"><path fill="none" stroke="#fff" stroke-width="2.400" d="M8 8h8v8H8zM8 8V5.500A3 3 0 1 0 5 8.500h3M16 8V5.500a3 3 0 1 1 3 3h-3M8 16v2.500A3 3 0 1 1 5 15.500h3M16 16v2.500a3 3 0 1 0 3-3h-3"/></svg>
<svg style="left:740.5px;top:531.5px;" width="26" height="24" viewBox="0 0 26 24"><path fill="none" stroke="#fff" stroke-width="2.400" stroke-linejoin="round" d="M13 2L2 13h6v9h10v-9h6z"/></svg>
<div style="left:868.5px;top:961px;width:1912.5px;height:1050px;background:#ff00ff;border-radius:19px;"></div>
<div style="left:1726px;top:1990px;width:627px;height:63px;background:#ff00ff;border-radius:0 0 22px 22px;"></div>
<div style="left:1716px;top:2011px;width:10px;height:10px;background:radial-gradient(circle at 0 100%,transparent 9.500px,#ff00ff 10px);"></div>
<div style="left:2353px;top:2011px;width:10px;height:10px;background:radial-gradient(circle at 100% 100%,transparent 9.500px,#ff00ff 10px);"></div>
<div style="left:876.5px;top:969px;width:1896.5px;height:1034px;border-radius:13px;overflow:hidden;background:#fff;">
<div style="left:0;top:0;width:328.5px;height:1034px;overflow:hidden;background:linear-gradient(180deg,#dddbdd 0%,#e1dfe1 30%,#e1dee0 55%,#e4d8dc 72%,#e8d0d0 88%,#e9c9c8 100%);">
<div style="left:130px;top:330px;width:460px;height:440px;background:radial-gradient(ellipse closest-side at 50% 50%,rgba(236,218,204,.95),rgba(236,218,204,0));"></div>
<div style="left:120px;top:560px;width:480px;height:400px;background:radial-gradient(ellipse closest-side at 50% 50%,rgba(208,196,236,.95),rgba(208,196,236,0));"></div>
<div style="left:-200px;top:760px;width:500px;height:400px;background:radial-gradient(ellipse closest-side at 50% 50%,rgba(236,200,196,.7),rgba(236,200,196,0));"></div>
</div>
<div style="left:327.5px;top:0px;width:1.5px;height:1034px;background:#d2d0d2;"></div>
<div style="left:12.5px;top:11px;width:28px;height:28px;background:#cfcdcf;border-radius:50%;border:1.500px solid #bcbabc;box-sizing:border-box;"></div>
<div style="left:58.5px;top:11px;width:28px;height:28px;background:#cfcdcf;border-radius:50%;border:1.500px solid #bcbabc;box-sizing:border-box;"></div>
<div style="left:105.5px;top:11px;width:28px;height:28px;background:#28c840;border-radius:50%;border:1.500px solid #1eab32;box-sizing:border-box;"></div>
<div style="left:302.5px;top:65px;width:18px;height:820px;background:#b1afb1;border-radius:9px;"></div>
<span class="t" style="left:30.5px;top:94.9px;font-size:24px;color:#a9a7a9;font-weight:700;letter-spacing:0.89px;">iCloud</span>
<svg style="left:34.5px;top:143px;" width="40" height="30" viewBox="0 0 40 30"><path fill="none" stroke="#17a3c4" stroke-width="2.800" d="M10 27a8 8 0 0 1-1-15.900A11 11 0 0 1 30 10a8.500 8.500 0 0 1 0 17z"/></svg>
<span class="t" style="left:88px;top:143.4px;font-size:31px;color:#3b3b3b;">iCloud Dri...</span>
<svg style="left:34.5px;top:209px;" width="42" height="32" viewBox="0 0 42 32"><g fill="none" stroke="#17a3c4" stroke-width="2.800"><path d="M2 12V5a3 3 0 0 1 3-3h8l3 3h10M2 12v14a3 3 0 0 0 3 3h26a3 3 0 0 0 3-3V14"/><path d="M2 12h24"/></g><circle cx="33" cy="8" r="7" fill="#17a3c4"/><circle cx="33" cy="6" r="2.200" fill="#e0dde0"/><path fill="#e0dde0" d="M29 12a4 4 0 0 1 8 0z"/></svg>
<span class="t" style="left:88px;top:209.4px;font-size:31px;color:#3b3b3b;letter-spacing:-0.33px;">Shared</span>
<span class="t" style="left:30.5px;top:301.9px;font-size:24px;color:#a9a7a9;font-weight:700;letter-spacing:1.19px;">Tags</span>
<div style="left:42px;top:354.3px;width:23px;height:23px;background:#ff0a0a;border-radius:50%;"></div>
<span class="t" style="left:88px;top:350.2px;font-size:31px;color:#3b3b3b;letter-spacing:-1.62px;">Red</span>
<div style="left:42px;top:419.8px;width:23px;height:23px;background:#f57600;border-radius:50%;"></div>
<span class="t" style="left:88px;top:415.7px;font-size:31px;color:#3b3b3b;letter-spacing:-0.07px;">Orange</span>
<div style="left:42px;top:485.3px;width:23px;height:23px;background:#f0b400;border-radius:50%;"></div>
<span class="t" style="left:88px;top:481.2px;font-size:31px;color:#3b3b3b;letter-spacing:-0.25px;">Yellow</span>
<div style="left:42px;top:550.8px;width:23px;height:23px;background:#05b80f;border-radius:50%;"></div>
<span class="t" style="left:88px;top:546.7px;font-size:31px;color:#3b3b3b;letter-spacing:-0.46px;">Green.</span>
<div style="left:42px;top:616.3px;width:23px;height:23px;background:#0a72ff;border-radius:50%;"></div>
<span class="t" style="left:88px;top:612.2px;font-size:31px;color:#3b3b3b;letter-spacing:-0.51px;">Blue</span>
<div style="left:42px;top:681.8px;width:23px;height:23px;background:#ad45d0;border-radius:50%;"></div>
<span class="t" style="left:88px;top:677.7px;font-size:31px;color:#3b3b3b;letter-spacing:0.06px;">Purple</span>
<div style="left:42px;top:747.3px;width:23px;height:23px;background:#6f6d74;border-radius:50%;"></div>
<span class="t" style="left:88px;top:743.2px;font-size:31px;color:#3b3b3b;letter-spacing:-0.79px;">Gray</span>
<svg style="left:37.5px;top:811px;" width="34" height="26" viewBox="0 0 34 26"><g fill="none" stroke="#7a787c" stroke-width="2.500"><circle cx="12" cy="13" r="10"/><circle cx="21" cy="13" r="10"/></g></svg>
<span class="t" style="left:88px;top:809.4px;font-size:31px;color:#3b3b3b;letter-spacing:-0.17px;">All Tags...</span>
<span class="t" style="left:30.5px;top:900.9px;font-size:24px;color:#a9a7a9;font-weight:700;letter-spacing:0.92px;">Favorites</span>
<svg style="left:36.5px;top:949px;" width="36" height="34" viewBox="0 0 36 34"><g fill="none" stroke="#1a78ff" stroke-width="3.200" stroke-linecap="round"><path d="M18 4L7 24M15 4l13 24M2 21h13M22 21h11M5 27l-1.500 3"/></g></svg>
<span class="t" style="left:88px;top:950.4px;font-size:31px;color:#3b3b3b;letter-spacing:0.17px;">Applicati...</span>
<div style="left:16.5px;top:997.6px;width:252.7px;height:60px;background:#d0b4b2;border-radius:10px;"></div>
<svg style="left:39.5px;top:1014px;" width="30" height="36" viewBox="0 0 30 36"><path fill="none" stroke="#1a78ff" stroke-width="3.200" stroke-linejoin="round" d="M3 34V5a3 3 0 0 1 3-3h11l10 10v22M17 2v10h10"/></svg>
<span class="t" style="left:88px;top:1013.4px;font-size:31px;color:#3b3b3b;letter-spacing:0.36px;">Documents</span>
<div style="left:329px;top:0px;width:1567.5px;height:58px;background:#f1f1f1;border-bottom:1.500px solid #d8d8d8;box-sizing:border-box;"></div>
<span class="t" style="left:1051.9px;top:8.9px;font-size:30px;color:#3a3a3a;font-weight:700;letter-spacing:0.27px;">Save As</span>
<span class="t" style="left:714.7px;top:96.7px;font-size:26.5px;color:#7c7c7c;letter-spacing:-0.2px;">Save As:</span>
<div style="left:834.5px;top:76px;width:558.5px;height:60px;background:#fff;border:6.500px solid #7da2f3;border-radius:14px;box-sizing:border-box;box-shadow:0 0 0 1px rgba(125,162,243,.5);"></div>
<div style="left:864.5px;top:86px;width:449.5px;height:38.5px;background:#b3d7ff;"></div>
<span class="t" style="left:865px;top:93.4px;font-size:31px;color:#111;letter-spacing:0.31px;">Engaging Graphics [Recovered]</span>
<span class="t" style="left:1314px;top:93.4px;font-size:31px;color:#111;letter-spacing:-0.25px;">.ai</span>
<span class="t" style="left:754.8px;top:171.7px;font-size:26.5px;color:#7c7c7c;letter-spacing:-0.07px;">Tags:</span>
<div style="left:840.2px;top:158px;width:546.5px;height:47px;background:#fff;border:1.500px solid #dcdcdc;border-radius:11px;box-sizing:border-box;box-shadow:0 1.500px 1.500px rgba(0,0,0,.12);"></div>
<div style="left:377.2px;top:256.7px;width:54.5px;height:47px;background:#fff;border:1px solid #e4e4e4;border-radius:11px;box-sizing:border-box;box-shadow:0 1.500px 2.500px rgba(0,0,0,.18);"></div>
<div style="left:433px;top:256.7px;width:54.5px;height:47px;background:#fff;border:1px solid #e4e4e4;border-radius:11px;box-sizing:border-box;box-shadow:0 1.500px 2.500px rgba(0,0,0,.18);"></div>
<svg style="left:394.5px;top:267px;" width="16" height="26" viewBox="0 0 16 26"><path fill="none" stroke="#b4b4b4" stroke-width="3" stroke-linecap="round" stroke-linejoin="round" d="M13 2L3 13l10 11"/></svg>
<svg style="left:453.5px;top:267px;" width="16" height="26" viewBox="0 0 16 26"><path fill="none" stroke="#b4b4b4" stroke-width="3" stroke-linecap="round" stroke-linejoin="round" d="M3 2l10 11L3 24"/></svg>
<div style="left:506.1px;top:256.7px;width:107.5px;height:47px;background:#fff;border:1px solid #e4e4e4;border-radius:11px;box-sizing:border-box;box-shadow:0 1.500px 2.500px rgba(0,0,0,.18);"></div>
<svg style="left:527.5px;top:265px;" width="36" height="28" viewBox="0 0 36 28"><g fill="none" stroke="#2a2a2a" stroke-width="2.800"><rect x="1.500" y="1.500" width="33" height="25" rx="4"/><path d="M12.500 1.500v25M23.500 1.500v25"/></g></svg>
<svg style="left:582px;top:275px;" width="17" height="12" viewBox="0 0 17 12"><path fill="none" stroke="#1e1e1e" stroke-width="3.600" stroke-linecap="round" stroke-linejoin="round" d="M2 2l6.500 6.500L15 2"/></svg>
<div style="left:632.3px;top:256.7px;width:105.6px;height:47px;background:#fff;border:1px solid #e4e4e4;border-radius:11px;box-sizing:border-box;box-shadow:0 1.500px 2.500px rgba(0,0,0,.18);"></div>
<svg style="left:654.5px;top:263px;" width="33" height="34" viewBox="0 0 33 34"><path stroke="#2a2a2a" stroke-width="2" d="M0 3h32"/><rect x="1.0" y="7.5" width="7.500" height="7.500" rx="1.500" fill="none" stroke="#2a2a2a" stroke-width="2"/><rect x="12.5" y="7.5" width="7.500" height="7.500" rx="1.500" fill="none" stroke="#2a2a2a" stroke-width="2"/><rect x="24.0" y="7.5" width="7.500" height="7.500" rx="1.500" fill="none" stroke="#2a2a2a" stroke-width="2"/><path stroke="#2a2a2a" stroke-width="2" d="M0 20h32"/><rect x="1.0" y="24.5" width="7.500" height="7.500" rx="1.500" fill="none" stroke="#2a2a2a" stroke-width="2"/><rect x="12.5" y="24.5" width="7.500" height="7.500" rx="1.500" fill="none" stroke="#2a2a2a" stroke-width="2"/><rect x="24.0" y="24.5" width="7.500" height="7.500" rx="1.500" fill="none" stroke="#2a2a2a" stroke-width="2"/></svg>
<svg style="left:705.5px;top:275px;" width="17" height="12" viewBox="0 0 17 12"><path fill="none" stroke="#1e1e1e" stroke-width="3.600" stroke-linecap="round" stroke-linejoin="round" d="M2 2l6.500 6.500L15 2"/></svg>
<div style="left:838.5px;top:256.7px;width:485px;height:47px;background:#fff;border:1px solid #e4e4e4;border-radius:11px;box-sizing:border-box;box-shadow:0 1.500px 2.500px rgba(0,0,0,.18);"></div>
<svg style="left:859.5px;top:266px;" width="33.5" height="30" viewBox="0 0 33.5 30"><path fill="#3fa9ea" d="M0 3.500C0 1.500 1.500 0 3.500 0h9l4 4H30c2 0 3.500 1.500 3.500 3.500V9H0z"/><rect y="6" width="33.500" height="24" rx="3" fill="#62c0f7"/><rect y="27" width="33.500" height="3" rx="1.500" fill="#45a4df"/></svg>
<span class="t" style="left:905px;top:265.4px;font-size:31px;color:#222;letter-spacing:-1.23px;">ADOBE ILLUSTRATOR 2...</span>
<div style="left:1280.3px;top:261px;width:38.5px;height:38px;background:linear-gradient(180deg,#2b8dff,#0a72f5);border-radius:9px;"></div>
<svg style="left:1289.5px;top:267px;" width="20" height="26" viewBox="0 0 20 26"><path fill="none" stroke="#fff" stroke-width="3" stroke-linecap="round" stroke-linejoin="round" d="M3.500 9.500L10 3l6.500 6.500M3.500 16.500L10 23l6.500-6.500"/></svg>
<div style="left:1341.3px;top:256.7px;width:47px;height:47px;background:#fff;border:1px solid #e4e4e4;border-radius:11px;box-sizing:border-box;box-shadow:0 1.500px 2.500px rgba(0,0,0,.18);"></div>
<svg style="left:1356.5px;top:274px;" width="17" height="12" viewBox="0 0 17 12"><path fill="none" stroke="#1e1e1e" stroke-width="3.600" stroke-linecap="round" stroke-linejoin="round" d="M2 10l6.500-6.500L15 10"/></svg>
<div style="left:1491.1px;top:256.7px;width:357px;height:47px;background:#fff;border:1px solid #e4e4e4;border-radius:11px;box-sizing:border-box;box-shadow:0 1.500px 2.500px rgba(0,0,0,.18);"></div>
<svg style="left:1507.5px;top:267px;" width="30" height="30" viewBox="0 0 30 30"><circle cx="12" cy="12" r="9.500" fill="none" stroke="#2a2a2a" stroke-width="2.800"/><path stroke="#2a2a2a" stroke-width="3.200" stroke-linecap="round" d="M19 19l8 8"/></svg>
<span class="t" style="left:1556.2px;top:265.4px;font-size:31px;color:#b9b9b9;letter-spacing:-0.37px;">Search</span>
<div style="left:329px;top:353px;width:1567.5px;height:1.5px;background:#e2e2e2;"></div>
<div style="left:329px;top:419px;width:1567.5px;height:2px;background:#e2e2e2;"></div>
<div style="left:329px;top:354.5px;width:1567.5px;height:64.5px;background:linear-gradient(90deg,#fbfbfb,#fff 30%);"></div>
<div style="left:329.0px;top:354.5px;width:386.500px;height:354.500px;overflow:hidden">
<span class="t" style="left:-65.7px;top:21.4px;font-size:25px;color:#8b8b8b;font-weight:700;letter-spacing:0.81px;">Previous 30 Days</span>
<div style="left:0px;top:305.5px;width:361px;height:47px;background:#dcdcdc;border-radius:0 9px 9px 0;"></div>
<span class="t" style="left:-65.2px;top:157.9px;font-size:31px;color:#232323;letter-spacing:-0.75px;">ADOBE ARIZ...A BRANDING</span>
<svg style="left:337.5px;top:164.5px;" width="11" height="18" viewBox="0 0 11 18"><path fill="none" stroke="#7b7b7b" stroke-width="2.200" stroke-linecap="round" stroke-linejoin="round" d="M2 2l7 7-7 7"/></svg>
<span class="t" style="left:-64.1px;top:208.9px;font-size:31px;color:#bdbdbd;letter-spacing:0.42px;">AdobeStock...45100.mogrt</span>
<span class="t" style="left:-89.8px;top:259.9px;font-size:31px;color:#232323;letter-spacing:-1.34px;">BEGINNERS F...WORKSHOPS</span>
<svg style="left:337.5px;top:266.5px;" width="11" height="18" viewBox="0 0 11 18"><path fill="none" stroke="#7b7b7b" stroke-width="2.200" stroke-linecap="round" stroke-linejoin="round" d="M2 2l7 7-7 7"/></svg>
<span class="t" style="left:-64.7px;top:310.9px;font-size:31px;color:#232323;letter-spacing:-1.47px;">BOOKSTORE WORKSHOPS</span>
<svg style="left:337.5px;top:317.5px;" width="11" height="18" viewBox="0 0 11 18"><path fill="none" stroke="#7b7b7b" stroke-width="2.200" stroke-linecap="round" stroke-linejoin="round" d="M2 2l7 7-7 7"/></svg>
</div>
<div style="left:715.5px;top:354.5px;width:33.5px;height:354.5px;background:#fafafa;border-left:1.500px solid #e2e2e2;border-right:1.500px solid #e2e2e2;box-sizing:border-box;"></div>
<div style="left:722.8px;top:425px;width:19px;height:135px;background:#c2c2c2;border-radius:9.500px;"></div>
<div style="left:726.8px;top:684px;width:2px;height:15px;background:#9a9a9a;"></div>
<div style="left:735.2px;top:684px;width:2px;height:15px;background:#9a9a9a;"></div>
<div style="left:1288px;top:354.5px;width:35px;height:354.5px;background:#fafafa;border-left:1.500px solid #e2e2e2;border-right:1.500px solid #e2e2e2;box-sizing:border-box;"></div>
<div style="left:1296px;top:362px;width:19px;height:182px;background:#c2c2c2;border-radius:9.500px;"></div>
<div style="left:1300px;top:684px;width:2px;height:15px;background:#9a9a9a;"></div>
<div style="left:1308.5px;top:684px;width:2px;height:15px;background:#9a9a9a;"></div>
<div style="left:1862.1px;top:354.5px;width:35px;height:354.5px;background:#fafafa;border-left:1.500px solid #e2e2e2;border-right:1.500px solid #e2e2e2;box-sizing:border-box;"></div>
<div style="left:1870.1px;top:362px;width:19px;height:241px;background:#c2c2c2;border-radius:9.500px;"></div>
<div style="left:1874.1px;top:684px;width:2px;height:15px;background:#9a9a9a;"></div>
<div style="left:1882.6px;top:684px;width:2px;height:15px;background:#9a9a9a;"></div>
<span class="t" style="left:836.5px;top:375.9px;font-size:25px;color:#8b8b8b;font-weight:700;letter-spacing:0.81px;">Previous 30 Days</span>
<div style="left:773px;top:486px;width:491.5px;height:51px;background:#dcdcdc;border-radius:9px;"></div>
<svg style="left:789.1px;top:444px;" width="33.5" height="30" viewBox="0 0 33.5 30"><path fill="#3fa9ea" d="M0 3.500C0 1.500 1.500 0 3.500 0h9l4 4H30c2 0 3.500 1.500 3.500 3.500V9H0z"/><rect y="6" width="33.500" height="24" rx="3" fill="#62c0f7"/><rect y="27" width="33.500" height="3" rx="1.500" fill="#45a4df"/></svg>
<span class="t" style="left:837.5px;top:443.4px;font-size:31px;color:#232323;letter-spacing:-1.33px;">ADOBE AERO</span>
<svg style="left:1239.5px;top:450px;" width="11" height="18" viewBox="0 0 11 18"><path fill="none" stroke="#7b7b7b" stroke-width="2.200" stroke-linecap="round" stroke-linejoin="round" d="M2 2l7 7-7 7"/></svg>
<svg style="left:789.1px;top:496px;" width="33.5" height="30" viewBox="0 0 33.5 30"><path fill="#3fa9ea" d="M0 3.500C0 1.500 1.500 0 3.500 0h9l4 4H30c2 0 3.500 1.500 3.500 3.500V9H0z"/><rect y="6" width="33.500" height="24" rx="3" fill="#62c0f7"/><rect y="27" width="33.500" height="3" rx="1.500" fill="#45a4df"/></svg>
<span class="t" style="left:837.5px;top:495.4px;font-size:31px;color:#232323;letter-spacing:-0.55px;">ADOBE ILLU...RATOR 2023</span>
<svg style="left:1239.5px;top:502px;" width="11" height="18" viewBox="0 0 11 18"><path fill="none" stroke="#7b7b7b" stroke-width="2.200" stroke-linecap="round" stroke-linejoin="round" d="M2 2l7 7-7 7"/></svg>
<span class="t" style="left:836.5px;top:619.4px;font-size:25px;color:#8b8b8b;font-weight:700;letter-spacing:0.59px;">January</span>
<svg style="left:789.1px;top:671px;" width="33.5" height="30" viewBox="0 0 33.5 30"><path fill="#3fa9ea" d="M0 3.500C0 1.500 1.500 0 3.500 0h9l4 4H30c2 0 3.500 1.500 3.500 3.500V9H0z"/><rect y="6" width="33.500" height="24" rx="3" fill="#62c0f7"/><rect y="27" width="33.500" height="3" rx="1.500" fill="#45a4df"/></svg>
<span class="t" style="left:837.5px;top:670.4px;font-size:31px;color:#232323;letter-spacing:-1.36px;">ADOBE AFTER EFFECTS</span>
<svg style="left:1239.5px;top:677px;" width="11" height="18" viewBox="0 0 11 18"><path fill="none" stroke="#7b7b7b" stroke-width="2.200" stroke-linecap="round" stroke-linejoin="round" d="M2 2l7 7-7 7"/></svg>
<span class="t" style="left:1411.2px;top:375.9px;font-size:25px;color:#8b8b8b;font-weight:700;letter-spacing:0.76px;">Yesterday</span>
<svg style="left:1362.1px;top:444px;" width="33.5" height="30" viewBox="0 0 33.5 30"><path fill="#3fa9ea" d="M0 3.500C0 1.500 1.500 0 3.500 0h9l4 4H30c2 0 3.500 1.500 3.500 3.500V9H0z"/><rect y="6" width="33.500" height="24" rx="3" fill="#62c0f7"/><rect y="27" width="33.500" height="3" rx="1.500" fill="#45a4df"/></svg>
<span class="t" style="left:1411.2px;top:443.4px;font-size:31px;color:#232323;letter-spacing:0.24px;">Additional Logos</span>
<svg style="left:1813.5px;top:450px;" width="11" height="18" viewBox="0 0 11 18"><path fill="none" stroke="#7b7b7b" stroke-width="2.200" stroke-linecap="round" stroke-linejoin="round" d="M2 2l7 7-7 7"/></svg>
<svg style="left:1361.5px;top:493px;" width="34" height="36" viewBox="0 0 34 36"><path fill="#f7f7f7" stroke="#dedede" stroke-width="1.500" d="M1 1h22l10 10v24H1z"/><path stroke="#e4e6f2" stroke-width="1" d="M5 6v28M10 6v28M15 6v28M20 6v28M25 12v22M29 12v22M2 10h22M2 15h30M2 20h30M2 25h30M2 30h30"/><path stroke="#e87a70" stroke-width="2.500" d="M17 9v20"/><path fill="#fff" stroke="#dedede" stroke-width="1.500" d="M23 1v10h10z"/></svg>
<span class="t" style="left:1411.2px;top:495.4px;font-size:31px;color:#bdbdbd;letter-spacing:0.06px;">Engaging Gr...Recovered].ai</span>
<svg style="left:1362.1px;top:547.7px;" width="33.5" height="30" viewBox="0 0 33.5 30"><path fill="#3fa9ea" d="M0 3.500C0 1.500 1.500 0 3.500 0h9l4 4H30c2 0 3.500 1.500 3.500 3.500V9H0z"/><rect y="6" width="33.500" height="24" rx="3" fill="#62c0f7"/><rect y="27" width="33.500" height="3" rx="1.500" fill="#45a4df"/></svg>
<span class="t" style="left:1411.2px;top:547.1px;font-size:31px;color:#232323;letter-spacing:-1.39px;">EXCEL FILES</span>
<svg style="left:1813.5px;top:553.7px;" width="11" height="18" viewBox="0 0 11 18"><path fill="none" stroke="#7b7b7b" stroke-width="2.200" stroke-linecap="round" stroke-linejoin="round" d="M2 2l7 7-7 7"/></svg>
<svg style="left:1362.1px;top:599px;" width="33.5" height="30" viewBox="0 0 33.5 30"><path fill="#3fa9ea" d="M0 3.500C0 1.500 1.500 0 3.500 0h9l4 4H30c2 0 3.500 1.500 3.500 3.500V9H0z"/><rect y="6" width="33.500" height="24" rx="3" fill="#62c0f7"/><rect y="27" width="33.500" height="3" rx="1.500" fill="#45a4df"/></svg>
<span class="t" style="left:1411.2px;top:598.4px;font-size:31px;color:#232323;letter-spacing:0.17px;">Project Elements</span>
<svg style="left:1813.5px;top:605px;" width="11" height="18" viewBox="0 0 11 18"><path fill="none" stroke="#7b7b7b" stroke-width="2.200" stroke-linecap="round" stroke-linejoin="round" d="M2 2l7 7-7 7"/></svg>
<svg style="left:1362.1px;top:650.5px;" width="33.5" height="30" viewBox="0 0 33.5 30"><path fill="#3fa9ea" d="M0 3.500C0 1.500 1.500 0 3.500 0h9l4 4H30c2 0 3.500 1.500 3.500 3.500V9H0z"/><rect y="6" width="33.500" height="24" rx="3" fill="#62c0f7"/><rect y="27" width="33.500" height="3" rx="1.500" fill="#45a4df"/></svg>
<span class="t" style="left:1411.2px;top:649.9px;font-size:31px;color:#232323;letter-spacing:0.09px;">Screen Captures</span>
<svg style="left:1813.5px;top:656.5px;" width="11" height="18" viewBox="0 0 11 18"><path fill="none" stroke="#7b7b7b" stroke-width="2.200" stroke-linecap="round" stroke-linejoin="round" d="M2 2l7 7-7 7"/></svg>
<div style="left:329px;top:709px;width:1567.5px;height:35px;background:#fafafa;border-top:1.500px solid #e2e2e2;border-bottom:2px solid #e6e6e6;box-sizing:border-box;"></div>
<div style="left:833.5px;top:718px;width:1055px;height:18px;background:#c1c1c1;border-radius:9px;"></div>
<div style="left:345.5px;top:766.6px;width:364.5px;height:47px;background:#fff;border:1px solid #e4e4e4;border-radius:11px;box-sizing:border-box;box-shadow:0 1.500px 2.500px rgba(0,0,0,.18);"></div>
<span class="t" style="left:372px;top:775.4px;font-size:31px;color:#222;letter-spacing:0.1px;">Save Cloud Document</span>
<span class="t" style="left:754.9px;top:765.4px;font-size:31px;color:#222;letter-spacing:0.6px;">Format:</span>
<div style="left:863.5px;top:758px;width:611px;height:44px;background:#fff;border:1px solid #e4e4e4;border-radius:11px;box-sizing:border-box;box-shadow:0 1.500px 2.500px rgba(0,0,0,.18);"></div>
<div style="left:1433.5px;top:761px;width:40px;height:38px;background:linear-gradient(180deg,#2b8dff,#0a72f5);border-radius:9px;"></div>
<span class="t" style="left:1441px;top:844.4px;font-size:31px;color:#b7b7b7;letter-spacing:-1.33px;">Range:</span>
<div style="left:1552.5px;top:832px;width:171.7px;height:49px;border:1.500px solid #ededed;border-bottom:2px solid #dcdcdc;box-sizing:border-box;"></div>
<span class="t" style="left:1560.5px;top:843.4px;font-size:31px;color:#c6c6c6;">1</span>
<div style="left:329px;top:898px;width:1567.5px;height:2px;background:#e0e0e0;"></div>
<div style="left:377.2px;top:947px;width:208.5px;height:47px;background:#fff;border:1px solid #e4e4e4;border-radius:11px;box-sizing:border-box;box-shadow:0 1.500px 2.500px rgba(0,0,0,.18);"></div>
<span class="t" style="left:400.7px;top:955.4px;font-size:31px;color:#222;letter-spacing:0.35px;">New Folder</span>
<div style="left:1493.2px;top:947px;width:169.5px;height:47px;background:#fff;border:1px solid #e4e4e4;border-radius:11px;box-sizing:border-box;box-shadow:0 1.500px 2.500px rgba(0,0,0,.18);"></div>
<span class="t" style="left:1529.5px;top:955.4px;font-size:31px;color:#222;letter-spacing:0.08px;">Cancel</span>
<div style="left:1681.5px;top:947px;width:168px;height:47px;background:linear-gradient(180deg,#2a8cff,#0676fb);border-radius:11px;box-shadow:0 1px 2px rgba(0,0,80,.3);"></div>
<span class="t" style="left:1731.2px;top:955.4px;font-size:31px;color:#fff;letter-spacing:-0.66px;text-shadow:0 0 .6px #fff;">Save</span>
</div>
<div style="left:1734px;top:1717.5px;width:611px;height:327.5px;background:#e5e5e5;border-radius:13px;box-shadow:0 0 0 1.500px #c9c9c9,0 8px 20px rgba(0,0,0,.22);"></div>
<div style="left:1744.7px;top:1729px;width:588.5px;height:52px;background:#4f9bfd;border-radius:9px;"></div>
<svg style="left:1756px;top:1743px;" width="24" height="26" viewBox="0 0 24 26"><path fill="none" stroke="#fff" stroke-width="3.800" stroke-linecap="round" stroke-linejoin="round" d="M3 15l6 8L20 3"/></svg>
<span class="t" style="left:1790.7px;top:1740.4px;font-size:31px;color:#fff;letter-spacing:0.4px;">Adobe Illustrator (ai)</span>
<span class="t" style="left:1790.7px;top:1791.9px;font-size:31px;color:#232323;letter-spacing:0.13px;">Illustrator EPS (eps)</span>
<span class="t" style="left:1790.7px;top:1843.4px;font-size:31px;color:#232323;letter-spacing:0.56px;">Illustrator Template (ait)</span>
<span class="t" style="left:1790.7px;top:1894.9px;font-size:31px;color:#232323;letter-spacing:0.16px;">Adobe PDF (pdf)</span>
<span class="t" style="left:1790.7px;top:1946.4px;font-size:31px;color:#232323;">SVG Compressed (svgz)</span>
<span class="t" style="left:1790.7px;top:1997.9px;font-size:31px;color:#232323;letter-spacing:-0.33px;">SVG (svg)</span>
</body></html>
